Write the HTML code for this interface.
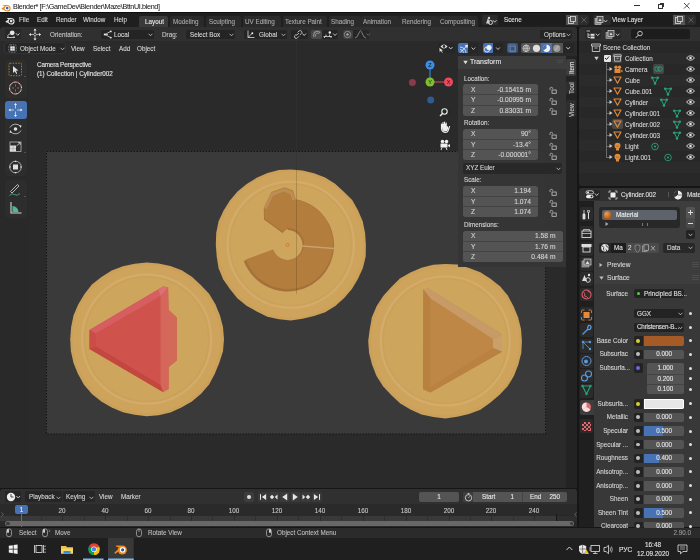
<!DOCTYPE html>
<html><head><meta charset="utf-8">
<style>
*{margin:0;padding:0;box-sizing:border-box}
html,body{width:700px;height:560px;overflow:hidden;background:#161616;font-family:"Liberation Sans",sans-serif;color:#d8d8d8}
.a{position:absolute}
.t{position:absolute;font-size:6.3px;line-height:8px;white-space:nowrap;color:#d6d6d6;-webkit-text-stroke-width:0.1px;will-change:transform}
.r{text-align:right}
.c{text-align:center}
.b{position:absolute;background:#282828;border-radius:2px}
.f{position:absolute;background:#545454}
svg{position:absolute;overflow:visible}
</style></head><body>
<!-- ============ TITLE BAR ============ -->
<div class="a" style="left:0;top:0;width:700px;height:12px;background:#fff"></div><div class="a" style="left:0;top:12px;width:700px;height:1.5px;background:#0e0e0e"></div>
<svg style="left:1px;top:1.5px" width="10" height="10" viewBox="0 0 10 10"><path d="M0.4 6.6 L3.6 4.4 L1.6 3.1 L5.2 3.1 Q9.4 2.8 9.6 6.2 Q9.6 9.6 6 9.6 Q3.6 9.6 3 7.8 L1.2 7.6 Z" fill="#f08a1c"/><circle cx="6.1" cy="6.2" r="2.3" fill="#fff"/><circle cx="6.2" cy="6.1" r="1.3" fill="#2a6ab0"/></svg>
<div class="t" style="left:13px;top:2px;color:#303040;font-size:7.2px;line-height:9px;letter-spacing:-0.33px;color:#1a1a1a;-webkit-text-stroke-width:0.05px">Blender* [F:\GameDev\Blender\Maze\BttnUI.blend]</div>
<div class="a" style="left:633.5px;top:5px;width:6px;height:0.9px;background:#333"></div>
<div class="a" style="left:658.3px;top:4px;width:4.5px;height:4.5px;border:0.9px solid #333"></div>
<div class="a" style="left:659.8px;top:2.7px;width:4.5px;height:4.5px;border-top:0.9px solid #333;border-right:0.9px solid #333"></div>
<svg style="left:683.5px;top:2.8px" width="5.5" height="5.5" viewBox="0 0 7 7"><path d="M0 0L7 7M7 0L0 7" stroke="#333" stroke-width="1.1"/></svg>

<!-- ============ TOP BAR ============ -->
<div class="a" style="left:0;top:13px;width:700px;height:14px;background:#1f1f1f"></div>

<svg style="left:5px;top:14.5px" width="10" height="10" viewBox="0 0 10 10"><path d="M0.4 6.6 L3.6 4.4 L1.6 3.1 L5.2 3.1 Q9.4 2.8 9.6 6.2 Q9.6 9.6 6 9.6 Q3.6 9.6 3 7.8 L1.2 7.6 Z" fill="#e6e6e6"/><circle cx="6.1" cy="6.2" r="2.3" fill="#232323"/><circle cx="6.2" cy="6.1" r="1.3" fill="#e6e6e6"/></svg>
<div class="t" style="left:19px;top:16px">File</div>
<div class="t" style="left:37px;top:16px">Edit</div>
<div class="t" style="left:55.5px;top:16px">Render</div>
<div class="t" style="left:83px;top:16px">Window</div>
<div class="t" style="left:113.5px;top:16px">Help</div>
<div class="a" style="left:139px;top:15.5px;width:29px;height:11.5px;background:#3a3a3a;border-radius:2px 2px 0 0"></div>
<div class="t" style="left:144.5px;top:17.8px;color:#e8e8e8">Layout</div>
<div class="a" style="left:170px;top:15.5px;width:34px;height:11.5px;background:#2a2a2a;border-radius:2px 2px 0 0"></div>
<div class="t" style="left:173px;top:17.8px;color:#a8a8a8">Modeling</div>
<div class="a" style="left:206px;top:15.5px;width:35px;height:11.5px;background:#2a2a2a;border-radius:2px 2px 0 0"></div>
<div class="t" style="left:209px;top:17.8px;color:#a8a8a8">Sculpting</div>
<div class="a" style="left:243px;top:15.5px;width:38px;height:11.5px;background:#2a2a2a;border-radius:2px 2px 0 0"></div>
<div class="t" style="left:245px;top:17.8px;color:#a8a8a8">UV Editing</div>
<div class="a" style="left:283px;top:15.5px;width:44px;height:11.5px;background:#2a2a2a;border-radius:2px 2px 0 0"></div>
<div class="t" style="left:284.5px;top:17.8px;color:#a8a8a8">Texture Paint</div>
<div class="a" style="left:329px;top:15.5px;width:32px;height:11.5px;background:#2a2a2a;border-radius:2px 2px 0 0"></div>
<div class="t" style="left:330.6px;top:17.8px;color:#a8a8a8">Shading</div>
<div class="a" style="left:361px;top:15.5px;width:39px;height:11.5px;background:#2a2a2a;border-radius:2px 2px 0 0"></div>
<div class="t" style="left:363px;top:17.8px;color:#a8a8a8">Animation</div>
<div class="a" style="left:400px;top:15.5px;width:38px;height:11.5px;background:#2a2a2a;border-radius:2px 2px 0 0"></div>
<div class="t" style="left:402px;top:17.8px;color:#a8a8a8">Rendering</div>
<div class="a" style="left:438px;top:15.5px;width:40px;height:11.5px;background:#2a2a2a;border-radius:2px 2px 0 0"></div>
<div class="t" style="left:440px;top:17.8px;color:#a8a8a8">Compositing</div>
<!-- scene selector -->
<div class="b" style="left:482px;top:15px;width:16px;height:10px;background:#2c2c2c"></div>
<svg style="left:485px;top:16px" width="12" height="9" viewBox="0 0 12 9"><path d="M1 7.5 L3 2 L5 7.5 Z" fill="#cfcfcf"/><circle cx="5.5" cy="6.5" r="2" fill="none" stroke="#cfcfcf" stroke-width="1"/><circle cx="4" cy="2" r="1.2" fill="#cfcfcf"/><path d="M7.9 4.2 L9.7 6.2 L11.5 4.2" fill="none" stroke="#cfcfcf" stroke-width="0.9"/></svg>
<div class="a" style="left:499px;top:15px;width:68px;height:10px;background:#1d1d1d;border-radius:2px 0 0 2px"></div>
<div class="t" style="left:504px;top:16px;color:#e0e0e0">Scene</div>
<div class="a" style="left:566px;top:15px;width:12px;height:10px;background:#545454"></div>
<svg style="left:568px;top:16px" width="8" height="8" viewBox="0 0 8 8"><rect x="0.5" y="1.5" width="5" height="6" fill="none" stroke="#ddd" stroke-width="0.8"/><rect x="2.5" y="0.5" width="5" height="5" fill="#545454" stroke="#ddd" stroke-width="0.8"/></svg>
<div class="a" style="left:578px;top:15px;width:11px;height:10px;background:#2c2c2c;border-radius:0 2px 2px 0"></div>
<svg style="left:581px;top:17px" width="6" height="6" viewBox="0 0 6 6"><path d="M0.5 0.5L5.5 5.5M5.5 0.5L0.5 5.5" stroke="#6a6a6a" stroke-width="0.8"/></svg>
<!-- view layer selector -->
<div class="b" style="left:593px;top:15px;width:18px;height:10px;background:#2c2c2c"></div>
<svg style="left:594px;top:16px" width="14" height="9" viewBox="0 0 14 9"><rect x="1" y="2.5" width="6" height="6" fill="#888" stroke="#ccc" stroke-width="0.6"/><rect x="3" y="0.5" width="6" height="6" fill="#555" stroke="#ddd" stroke-width="0.7"/><path d="M4.5 5 L6 2.5 L7.5 5Z" fill="#ddd"/><path d="M9.7 4.0 L11.5 6.0 L13.3 4.0" fill="none" stroke="#cfcfcf" stroke-width="0.9"/></svg>
<div class="a" style="left:611px;top:15px;width:74px;height:10px;background:#1d1d1d;border-radius:2px 0 0 2px"></div>
<div class="t" style="left:612px;top:16px;color:#e0e0e0">View Layer</div>
<div class="a" style="left:673px;top:15px;width:12px;height:10px;background:#545454"></div>
<svg style="left:675px;top:16px" width="8" height="8" viewBox="0 0 8 8"><rect x="0.5" y="1.5" width="5" height="6" fill="none" stroke="#ddd" stroke-width="0.8"/><rect x="2.5" y="0.5" width="5" height="5" fill="#545454" stroke="#ddd" stroke-width="0.8"/></svg>
<div class="a" style="left:685px;top:15px;width:11px;height:10px;background:#2c2c2c;border-radius:0 2px 2px 0"></div>
<svg style="left:688px;top:17px" width="6" height="6" viewBox="0 0 6 6"><path d="M0.5 0.5L5.5 5.5M5.5 0.5L0.5 5.5" stroke="#6a6a6a" stroke-width="0.8"/></svg>

<!-- ============ 3D VIEWPORT ============ -->
<div class="a" style="left:0;top:27px;width:577px;height:461px;background:#2a2a2a;border-radius:3px 3px 0 0;overflow:hidden"></div>
<div class="a" style="left:0;top:27px;width:577px;height:14px;background:#303030;border-radius:3px 3px 0 0"></div>
<!--COINS-->
<div class="a" style="left:46px;top:151px;width:500px;height:283px;background:#3a3a3a"></div>
<div class="a" style="left:296.2px;top:41px;width:0.9px;height:110px;background:#2f2f2f"></div>
<svg style="left:0;top:0" width="700" height="560" viewBox="0 0 700 560"><rect x="46.5" y="151.5" width="499" height="282.5" fill="none" stroke="#141414" stroke-width="1.1" stroke-dasharray="1.6 1.4"/><path d="M365.9 244.7 L365.7 256.6 L362.9 268.1 L357.9 278.9 L351.9 289.1 L344.2 298.1 L335.3 305.9 L325.2 312.2 L314.0 316.1 L302.5 318.8 L290.8 320.5 L279.0 319.2 L267.4 316.8 L256.7 311.5 L246.5 305.7 L237.3 298.2 L229.9 288.9 L223.1 279.2 L218.6 268.2 L216.7 256.4 L215.8 244.7 L216.2 232.9 L218.6 221.2 L223.6 210.5 L229.9 200.5 L237.5 191.4 L246.7 184.0 L256.7 177.7 L267.5 173.0 L279.0 170.1 L290.8 169.5 L302.6 170.4 L314.0 173.2 L325.1 177.5 L335.1 183.8 L343.8 191.7 L352.2 200.1 L358.1 210.4 L362.7 221.3 L365.1 232.9 Z" fill="#cba05a"/><circle cx="290.8" cy="244.7" r="72.6" fill="#cea45c"/><circle cx="290.8" cy="244.7" r="63.099999999999994" fill="none" stroke="#d5ae70" stroke-width="2.2" opacity="0.75"/><circle cx="290.8" cy="244.7" r="60.599999999999994" fill="none" stroke="#c89e57" stroke-width="1.2" opacity="0.45"/><circle cx="290.8" cy="244.7" r="59.99999999999999" fill="#cea55c"/><path d="M243.8 260.9 L245.7 265.4 L248.1 269.6 L250.9 273.6 L254.1 277.3 L257.6 280.6 L261.5 283.6 L265.7 286.1 L270.1 288.1 L274.7 289.7 L279.4 290.8 L284.3 291.4 L289.1 291.5 L294.0 291.0 L298.7 290.1 L303.4 288.7 L307.9 286.8 L312.1 284.4 L316.1 281.6 L319.8 278.4 L323.1 274.9 L326.1 271.0 L328.6 266.8 L330.6 262.4 L332.2 257.8 L333.3 253.1 L333.9 248.2 L334.0 243.4 L333.5 238.5 L332.6 233.8 L331.2 229.1 L329.3 224.6 L326.9 220.4 L324.1 216.4 L320.9 212.7 L317.4 209.4 L313.5 206.4 L309.3 203.9 L304.9 201.9 L300.3 200.3 L295.6 199.2 L295.6 199.2 L295.0 200.0 L292.6 191.5 L284.0 188.3 L271.0 193.0 L263.8 208.0 L264.0 219.5 L282.5 233.0 L287.0 228.5 L288.0 230.0 L290.1 230.2 L292.1 230.7 L294.1 231.5 L295.9 232.6 L297.5 233.9 L299.0 235.4 L300.2 237.1 L301.2 238.9 L301.9 240.9 L302.4 242.9 L302.5 245.0 L302.4 247.1 L301.9 249.1 L301.2 251.1 L300.2 252.9 L299.0 254.6 L297.5 256.1 L295.9 257.4 L294.1 258.5 L292.1 259.3 L290.1 259.8 L288.0 260.0 L285.9 259.9 L283.9 259.6 L281.9 258.9 L280.0 258.0 L278.3 256.8 L276.7 255.4 L275.4 253.8 L274.3 252.0 L273.4 250.1 Z" fill="#a4713a"/><path d="M245.2 260.4 L247.1 264.7 L249.3 268.8 L252.0 272.7 L255.1 276.3 L258.6 279.5 L262.3 282.3 L266.4 284.7 L270.6 286.7 L275.1 288.3 L279.7 289.3 L284.4 289.9 L289.1 290.0 L293.8 289.6 L298.4 288.7 L302.9 287.3 L307.2 285.4 L311.3 283.2 L315.2 280.5 L318.8 277.4 L322.0 273.9 L324.8 270.2 L327.2 266.1 L329.2 261.9 L330.8 257.4 L331.8 252.8 L332.4 248.1 L332.5 243.4 L332.1 238.7 L331.2 234.1 L329.8 229.6 L327.9 225.3 L325.7 221.2 L323.0 217.3 L319.9 213.7 L316.4 210.5 L312.7 207.7 L308.6 205.3 L304.4 203.3 L299.9 201.7 L295.3 200.7 L295.3 200.7 L295.0 200.0 L292.6 191.5 L284.0 188.3 L271.0 193.0 L263.8 208.0 L264.0 219.5 L282.5 233.0 L287.0 228.5 L288.1 229.0 L290.3 229.2 L292.4 229.8 L294.5 230.6 L296.4 231.7 L298.2 233.1 L299.8 234.7 L301.1 236.5 L302.1 238.5 L302.9 240.6 L303.3 242.8 L303.5 245.0 L303.3 247.2 L302.9 249.4 L302.1 251.5 L301.1 253.5 L299.8 255.3 L298.2 256.9 L296.4 258.3 L294.5 259.4 L292.4 260.2 L290.3 260.8 L288.1 261.0 L285.8 260.9 L283.6 260.5 L281.5 259.8 L279.5 258.9 L277.6 257.6 L276.0 256.1 L274.6 254.4 L273.4 252.5 L272.5 250.5 Z" fill="#b27d3d" transform="translate(0.5,-1)"/><path d="M302 246 L334 248.5" stroke="#c9a070" stroke-width="1.3"/><path d="M263.8 208 L271 193 L284 188.3 L292.6 191.5 L295 200 L292.5 200.5 L290 194 L283.5 191.5 L273 196 L266.5 209 Z" fill="#c39a68" opacity="0.6"/><circle cx="287.5" cy="245" r="1.6" fill="none" stroke="#e07020" stroke-width="0.8"/><path d="M224.0 339.2 L223.0 351.3 L219.3 362.8 L214.7 373.9 L209.1 384.6 L201.1 393.7 L191.9 401.6 L181.4 407.5 L170.4 412.4 L158.6 415.3 L146.6 416.2 L134.6 414.8 L122.9 412.3 L111.7 407.6 L101.3 401.6 L91.9 393.9 L84.0 384.7 L78.0 374.1 L73.5 362.9 L70.9 351.2 L70.2 339.2 L71.1 327.2 L73.5 315.4 L78.2 304.4 L84.5 294.1 L91.9 284.5 L101.4 277.0 L111.7 270.6 L122.9 266.3 L134.6 263.7 L146.6 262.5 L158.6 263.6 L170.4 266.1 L181.7 270.2 L191.9 276.8 L200.8 285.0 L209.1 293.8 L215.4 304.2 L220.0 315.4 L223.0 327.1 Z" fill="#cba05a"/><circle cx="146.6" cy="339.2" r="74" fill="#cea45c"/><circle cx="146.6" cy="339.2" r="64.5" fill="none" stroke="#d5ae70" stroke-width="2.2" opacity="0.75"/><circle cx="146.6" cy="339.2" r="62" fill="none" stroke="#c89e57" stroke-width="1.2" opacity="0.45"/><circle cx="146.6" cy="339.2" r="61.4" fill="#cea55c"/><path d="M89.5 330 L163.3 286.4 L168.1 287.6 L168.5 310 L176.6 317.4 L176.6 360.5 L168.5 367 L168.5 389 L163 392 L89.5 349 Z" fill="#cf524c"/><path d="M160.5 296 L168.1 287.6 L168.5 310 L176.6 317.4 L176.6 360.5 L168.5 367 L168.5 389 L163 392 L160.5 385 Z" fill="#d4665a"/><path d="M168.5 310 L176.6 317.4 L176.6 360.5 L168.5 367 Z" fill="#d26a5a"/><path d="M89.5 330 L163.3 286.4 L168.1 287.6 L160.5 296 L95.5 333.5 Z" fill="#d65d60"/><path d="M158.5 289.5 L163.3 286.4 L168.1 287.6 L160.5 296 Z" fill="#dc7274"/><path d="M89.5 349 L163 392 L160.5 385 L96 346.5 Z" fill="#c2473f"/><path d="M89.5 330 L95.5 333.5 L96 346.5 L89.5 349Z" fill="#ca4d47"/><path d="M521.9 341.0 L521.3 353.0 L518.3 364.7 L513.9 376.0 L507.6 386.3 L499.4 395.1 L490.2 402.8 L480.4 409.8 L469.0 413.9 L457.3 416.7 L445.3 418.4 L433.3 416.9 L421.4 414.5 L410.4 409.5 L400.0 403.3 L391.2 395.1 L383.0 386.3 L376.5 376.1 L372.1 364.8 L369.1 353.1 L368.2 341.0 L369.8 329.0 L371.9 317.2 L376.7 306.0 L383.2 295.9 L391.3 287.0 L399.9 278.5 L410.4 272.5 L421.5 267.7 L433.2 264.7 L445.3 263.9 L457.4 264.6 L469.0 268.0 L480.3 272.2 L490.5 278.8 L500.0 286.3 L507.8 295.6 L513.5 306.3 L518.1 317.3 L521.0 329.0 Z" fill="#cba05a"/><circle cx="445.3" cy="341" r="74" fill="#cea45c"/><circle cx="445.3" cy="341" r="64.5" fill="none" stroke="#d5ae70" stroke-width="2.2" opacity="0.75"/><circle cx="445.3" cy="341" r="62" fill="none" stroke="#c89e57" stroke-width="1.2" opacity="0.45"/><circle cx="445.3" cy="341" r="61.4" fill="#cea55c"/><path d="M423.3 289.6 L428.2 288.6 L495.7 330.3 L502 334.6 L502 351.7 L430.3 392.4 L423 389.2 Z" fill="#bf8745"/><path d="M423.3 289.6 L428.2 288.6 L495.7 330.3 L502 334.6 L493 339 L430.5 298.5 Z" fill="#c79a68"/><path d="M423.3 289.6 L430.5 298.5 L430.3 386 L430.3 392.4 L423 389.2 Z" fill="#b8813f"/><path d="M502 334.6 L502 351.7 L493 348 L493 339 Z" fill="#cb9f6c"/><path d="M493 348 L502 351.7 L430.3 392.4 L430.3 387 Z" fill="#b98242"/><path d="M296.5 151 V294" stroke="#3a2a10" stroke-width="0.7" opacity="0.3"/></svg>
<!--/COINS-->
<!-- ============ TOOL HEADER ============ -->
<div class="b" style="left:5px;top:29px;width:16px;height:10px;background:#282828"></div>
<svg style="left:6px;top:29px" width="15" height="10" viewBox="0 0 15 10"><path d="M1 8.5 H9 M2 8.5 V7 M8 8.5 V7 M1.5 6.5 L4 4.8" stroke="#ddd" stroke-width="0.8" fill="none"/><circle cx="6.2" cy="3.8" r="2.4" fill="#e6e6e6"/><path d="M10.0 4.3 L11.8 6.3 L13.6 4.3" fill="none" stroke="#cfcfcf" stroke-width="0.9"/></svg>
<svg style="left:28px;top:28px" width="14" height="13" viewBox="0 0 14 13"><path d="M7 1 V12 M1.5 6.5 H12.5" stroke="#ddd" stroke-width="0.7"/><path d="M7 0.5 L5.5 2.5 H8.5Z M7 12.5 L5.5 10.5 H8.5Z M1 6.5 L3 5 V8Z M13 6.5 L11 5 V8Z" fill="#eee"/><circle cx="7" cy="6.5" r="1.3" fill="#303030" stroke="#ddd" stroke-width="0.6"/></svg>
<div class="t" style="left:50px;top:30.7px;color:#c8c8c8">Orientation:</div>
<div class="b" style="left:101px;top:29.5px;width:52.5px;height:9.5px;background:#242424"></div>
<svg style="left:103px;top:30px" width="10" height="9" viewBox="0 0 10 9"><path d="M2 4.5 L7.5 1.5 M2 4.5 L7.5 7.5 M2 4.5 H5" stroke="#ddd" stroke-width="0.8"/><circle cx="1.8" cy="4.5" r="1.1" fill="#eee"/><circle cx="7.8" cy="1.4" r="0.9" fill="#eee"/><circle cx="7.8" cy="7.6" r="0.9" fill="#eee"/></svg>
<div class="t" style="left:114px;top:30.5px">Local</div>
<svg style="left:148px;top:33px" width="5" height="4" viewBox="0 0 5 4"><path d="M0.6 0.8 L2.5 2.8 L4.4 0.8" fill="none" stroke="#ccc" stroke-width="0.8"/></svg>
<div class="t" style="left:161.5px;top:30.5px;color:#c8c8c8">Drag:</div>
<div class="b" style="left:186px;top:29.5px;width:49px;height:9.5px;background:#242424"></div>
<div class="t" style="left:190px;top:30.5px">Select Box</div>
<svg style="left:229px;top:33px" width="5" height="4" viewBox="0 0 5 4"><path d="M0.6 0.8 L2.5 2.8 L4.4 0.8" fill="none" stroke="#ccc" stroke-width="0.8"/></svg>
<div class="b" style="left:244px;top:29.5px;width:43px;height:9.5px;background:#242424"></div>
<svg style="left:246px;top:30px" width="9" height="9" viewBox="0 0 9 9"><path d="M2 0.5 V7.5 H8.5 M2 7.5 L6 3.5" stroke="#ddd" stroke-width="0.8" fill="none"/><circle cx="6.3" cy="3.2" r="1" fill="#eee"/></svg>
<div class="t" style="left:258.5px;top:30.5px">Global</div>
<svg style="left:281px;top:33px" width="5" height="4" viewBox="0 0 5 4"><path d="M0.6 0.8 L2.5 2.8 L4.4 0.8" fill="none" stroke="#ccc" stroke-width="0.8"/></svg>
<div class="b" style="left:291px;top:29.5px;width:17px;height:9.5px;background:#242424"></div>
<svg style="left:292px;top:30px" width="15" height="9" viewBox="0 0 15 9"><path d="M5.5 2.5 L7 1 Q8.5 0 9.5 1.2 Q10.5 2.4 9.3 3.6 L7.8 5" fill="none" stroke="#ddd" stroke-width="0.8"/><path d="M4.5 4 L3 5.5 Q1.8 6.8 3 8 Q4.2 9 5.5 7.8 L7 6.3" fill="none" stroke="#ddd" stroke-width="0.8"/><path d="M4.5 5.5 L7 3" stroke="#ddd" stroke-width="0.8"/><path d="M10.4 3.5 L12.2 5.5 L14.0 3.5" fill="none" stroke="#cfcfcf" stroke-width="0.9"/></svg>
<div class="b" style="left:311px;top:29.5px;width:11px;height:9.5px;background:#4a4a4a"></div>
<svg style="left:312px;top:30px" width="9" height="9" viewBox="0 0 9 9"><path d="M2 7 Q1 3 4 1.5 Q7 0.5 8 3" fill="none" stroke="#999" stroke-width="1.1"/><path d="M3.5 6.5 Q3 4 5 3 Q6.5 2.5 7 4" fill="none" stroke="#999" stroke-width="0.9"/></svg>
<div class="b" style="left:322px;top:29.5px;width:16px;height:9.5px;background:#242424"></div>
<svg style="left:323px;top:30px" width="15" height="9" viewBox="0 0 15 9"><path d="M0.5 6.5 H9 M1.5 6.5 V8 M8 6.5 V8 M3 6.5 V4.5 M6.5 6.5 V4.5" stroke="#ddd" stroke-width="0.8"/><circle cx="6.8" cy="2.5" r="1.2" fill="#eee"/><path d="M10.2 3.5 L12.0 5.5 L13.8 3.5" fill="none" stroke="#cfcfcf" stroke-width="0.9"/></svg>
<div class="b" style="left:343px;top:29.5px;width:10px;height:9.5px;background:#3f3f3f"></div>
<svg style="left:343px;top:30px" width="9" height="9" viewBox="0 0 9 9"><circle cx="4.5" cy="4.5" r="3.2" fill="none" stroke="#999" stroke-width="0.8"/><circle cx="4.5" cy="4.5" r="1.2" fill="#aaa"/></svg>
<div class="b" style="left:353px;top:29.5px;width:16px;height:9.5px;background:#262626"></div><svg style="left:354px;top:30px" width="17" height="9" viewBox="0 0 17 9"><path d="M1 8 Q3 8 4.5 4 Q6 0.5 6.5 0.5 Q7 0.5 8.5 4 Q10 8 12 8" fill="none" stroke="#888" stroke-width="0.9"/><path d="M12.4 3.5 L14.2 5.5 L16.0 3.5" fill="none" stroke="#666" stroke-width="0.9"/></svg>
<div class="b" style="left:540px;top:30px;width:32px;height:9px;background:#242424"></div>
<div class="t" style="left:543.5px;top:30.5px">Options</div>
<svg style="left:566px;top:33px" width="5" height="4" viewBox="0 0 5 4"><path d="M0.6 0.8 L2.5 2.8 L4.4 0.8" fill="none" stroke="#ccc" stroke-width="0.8"/></svg>

<!-- ============ VIEWPORT HEADER ============ -->
<div class="b" style="left:5px;top:42.5px;width:59.5px;height:10.5px;background:#262626;box-shadow:0 0 0 0.6px #3a3a3a"></div>
<svg style="left:8px;top:43.5px" width="9" height="9" viewBox="0 0 9 9"><rect x="0.8" y="0.8" width="7.4" height="7.4" rx="1.5" fill="none" stroke="#bbb" stroke-width="0.6" stroke-dasharray="1.5 1"/><rect x="2.3" y="2.3" width="4.4" height="4.4" fill="#e8e8e8"/><path d="M4.5 2.3 V6.7 M2.3 4.5 H6.7" stroke="#777" stroke-width="0.4"/></svg>
<div class="t" style="left:19.5px;top:44.5px">Object Mode</div>
<svg style="left:59.5px;top:46.5px" width="5" height="4" viewBox="0 0 5 4"><path d="M0.6 0.8 L2.5 2.8 L4.4 0.8" fill="none" stroke="#ccc" stroke-width="0.8"/></svg>
<div class="b" style="left:67px;top:42.5px;width:20px;height:10.5px;background:#2b2b2b"></div>
<div class="t" style="left:71px;top:44.5px">View</div>
<div class="b" style="left:89px;top:42.5px;width:24px;height:10.5px;background:#2b2b2b"></div>
<div class="t" style="left:93px;top:44.5px">Select</div>
<div class="b" style="left:115px;top:42.5px;width:18px;height:10.5px;background:#2b2b2b"></div>
<div class="t" style="left:118.5px;top:44.5px">Add</div>
<div class="b" style="left:134.5px;top:42.5px;width:27px;height:10.5px;background:#2b2b2b"></div>
<div class="t" style="left:137px;top:44.5px">Object</div>

<div class="b" style="left:437.5px;top:42.7px;width:17px;height:10.7px;background:#262626"></div>
<svg style="left:438px;top:43px" width="17" height="10" viewBox="0 0 17 10"><path d="M2.5 3.5 Q6 -0.5 9.5 3.5 Q6 7.5 2.5 3.5Z" fill="#e8e8e8"/><circle cx="6" cy="3.5" r="1.4" fill="#333"/><path d="M1 4.5 L1.5 9.5 L2.8 8.2 L4.2 10 L5 9.4 L3.8 7.8 L5.5 7.5 Z" fill="#e8e8e8" stroke="#262626" stroke-width="0.5"/><path d="M10.9 4.0 L12.7 6.0 L14.5 4.0" fill="none" stroke="#cfcfcf" stroke-width="0.9"/></svg>
<div class="b" style="left:457.8px;top:42.7px;width:20.5px;height:10.7px;background:#262626"></div>
<div class="a" style="left:457.8px;top:42.7px;width:10.7px;height:10.7px;background:#4772b3;border-radius:2px 0 0 2px"></div>
<svg style="left:458.5px;top:43.5px" width="20" height="9" viewBox="0 0 20 9"><path d="M1.2 8.5 L8 1.7" fill="none" stroke="#f0f0f0" stroke-width="0.9"/><path d="M9 0.8 L5.6 1.5 L8.3 4.2Z" fill="#f0f0f0"/><path d="M1 3 A6 6 0 0 1 7 9" fill="none" stroke="#f0f0f0" stroke-width="0.8"/><path d="M1 5.5 A3.5 3.5 0 0 1 4.5 9" fill="none" stroke="#f0f0f0" stroke-width="0.7"/><path d="M12.6 3.5 L14.4 5.5 L16.2 3.5" fill="none" stroke="#cfcfcf" stroke-width="0.9"/></svg>
<div class="b" style="left:482.5px;top:42.7px;width:20.5px;height:10.7px;background:#262626"></div>
<div class="a" style="left:482.5px;top:42.7px;width:10.7px;height:10.7px;background:#4772b3;border-radius:2px 0 0 2px"></div>
<svg style="left:483px;top:43.5px" width="20" height="9" viewBox="0 0 20 9"><circle cx="4" cy="5.5" r="2.6" fill="none" stroke="#f0f0f0" stroke-width="0.9"/><circle cx="6" cy="3.5" r="2.6" fill="#f0f0f0"/><path d="M13.2 3.5 L15.0 5.5 L16.8 3.5" fill="none" stroke="#cfcfcf" stroke-width="0.9"/></svg>
<div class="b" style="left:507px;top:42.7px;width:10.8px;height:10.7px;background:#3b5475"></div>
<svg style="left:508px;top:43.5px" width="9" height="9" viewBox="0 0 9 9"><rect x="1" y="1" width="6" height="6" fill="none" stroke="#6c8ab8" stroke-width="0.7"/><rect x="2.5" y="2.5" width="5" height="5" fill="none" stroke="#6c8ab8" stroke-width="0.6"/></svg>
<div class="b" style="left:521px;top:42.7px;width:52.5px;height:10.7px;background:#262626"></div>
<div class="a" style="left:521px;top:42.7px;width:41.8px;height:10.7px;background:#545454;border-radius:2px 0 0 2px"></div>
<div class="a" style="left:541.3px;top:42.7px;width:10.3px;height:10.7px;background:#4772b3"></div>
<svg style="left:521px;top:42.7px" width="52" height="11" viewBox="0 0 52 11"><circle cx="5.2" cy="5.3" r="3.3" fill="none" stroke="#e0e0e0" stroke-width="0.7"/><path d="M1.9 5.3 H8.5 M5.2 2 V8.6" stroke="#e0e0e0" stroke-width="0.6"/><ellipse cx="5.2" cy="5.3" rx="1.4" ry="3.3" fill="none" stroke="#e0e0e0" stroke-width="0.6"/><circle cx="15.5" cy="5.3" r="3.6" fill="#dedede"/><circle cx="25.5" cy="5.3" r="3.6" fill="#f4f4f4"/><path d="M25.5 1.7 V5.3 L22.5 7.5 A3.6 3.6 0 0 1 25.5 1.7Z" fill="#4772b3"/><circle cx="35.8" cy="5.3" r="3.6" fill="#9a9a9a"/><path d="M33.5 7.5 Q36 6 37.2 3" stroke="#ccc" stroke-width="0.7" fill="none"/><path d="M45.4 4.1 L47.2 6.1 L49.0 4.1" fill="none" stroke="#cfcfcf" stroke-width="0.9"/></svg>

<!-- ============ TOOLBAR ============ -->
<div class="a" style="left:0;top:55px;width:29px;height:433px;background:#262626;opacity:.25"></div>
<div class="a" style="left:4.5px;top:59.5px;width:22.5px;height:38px;background:#2d2d2d;border-radius:3px"></div>
<div class="a" style="left:4.5px;top:101px;width:22.5px;height:75px;background:#2d2d2d;border-radius:3px"></div>
<div class="a" style="left:5px;top:101px;width:22px;height:18px;background:#4772b3;border-radius:3px"></div>
<div class="a" style="left:4.5px;top:180px;width:22.5px;height:37.5px;background:#2d2d2d;border-radius:3px"></div>
<svg style="left:0;top:0" width="30" height="220" viewBox="0 0 30 220">
 <rect x="9" y="63.2" width="12.5" height="12.5" rx="1" fill="none" stroke="#c8923a" stroke-width="0.8" stroke-dasharray="1.5 1.2"/>
 <path d="M13 66 L13 73 L14.8 71.3 L16.2 74 L17.2 73.5 L15.9 70.8 L18.3 70.5 Z" fill="#e0e0e0"/>
 <path d="M24.5 77 L25.5 76" stroke="#999" stroke-width="0.7"/>
 <circle cx="15.5" cy="88" r="6" fill="none" stroke="#ddd" stroke-width="1"/>
 <circle cx="15.5" cy="88" r="6" fill="none" stroke="#c03838" stroke-width="1" stroke-dasharray="2.2 2.5"/>
 <path d="M15.5 84.5 V86.5 M15.5 89.5 V91.5 M12 88 H14 M17 88 H19" stroke="#999" stroke-width="0.7"/>
 <path d="M15.5 104 V108.5 M15.5 111.5 V116 M9.5 110 H14 M17 110 H21.5" stroke="#f0f0f0" stroke-width="0.7"/>
 <path d="M15.5 103 L14 105 H17Z M15.5 117 L14 115 H17Z M8.5 110 L10.5 108.5 V111.5Z M22.5 110 L20.5 108.5 V111.5Z" fill="#f2f2f2"/>
 <path d="M10 127.5 A6 5.5 0 0 1 20.5 126.5" fill="none" stroke="#d0d0d0" stroke-width="0.8"/>
 <path d="M21 130.5 A6 5.5 0 0 1 10.5 131.5" fill="none" stroke="#d0d0d0" stroke-width="0.8"/>
 <circle cx="15.5" cy="129" r="1.8" fill="#e0e0e0"/>
 <path d="M19 125 L21.5 125.5 L20.8 128Z M12 133 L9.5 132.5 L10.2 130Z" fill="#e0e0e0"/>
 <rect x="10" y="145.5" width="6" height="6" fill="#dcdcdc"/>
 <path d="M13 145.5 V151.5 M10 148.5 H16" stroke="#888" stroke-width="0.4"/>
 <rect x="10" y="142" width="11" height="9.5" fill="none" stroke="#c8c8c8" stroke-width="0.7"/>
 <path d="M16.5 146 L20 142.8 M18 142.6 H20.2 V144.8" fill="none" stroke="#d8d8d8" stroke-width="0.8"/>
 <path d="M24.5 153 L25.5 152" stroke="#999" stroke-width="0.7"/>
 <circle cx="15.5" cy="167" r="5.8" fill="none" stroke="#c8c8c8" stroke-width="0.8"/>
 <rect x="13" y="164.5" width="5" height="5" fill="#e0e0e0"/>
 <path d="M15.5 160.5 L14.5 162 H16.5Z M15.5 173.5 L14.5 172 H16.5Z M9 167 L10.5 166 V168Z M22 167 L20.5 166 V168Z" fill="#e8e8e8"/>
 <path d="M10.5 191.5 L17.5 184.5 L19 186 L12 193 Z" fill="none" stroke="#d8d8d8" stroke-width="0.8"/>
 <path d="M9.5 195.5 Q12 192.5 14.5 194.5 Q17 196.5 20 193.5" fill="none" stroke="#52b892" stroke-width="0.8"/>
 <path d="M24.5 197 L25.5 196" stroke="#999" stroke-width="0.7"/>
 <path d="M11 202 V213 H21.5" fill="none" stroke="#d8d8d8" stroke-width="1.1"/>
 <path d="M12.5 212 V206 A6 6 0 0 1 18.5 212 Z" fill="#52b892"/>
</svg>

<!-- ============ NAV GIZMO ============ -->
<svg style="left:0;top:0" width="700" height="560" viewBox="0 0 700 560">
 <circle cx="412.4" cy="82.4" r="3.5" fill="#8a3a48"/>
 <circle cx="430.7" cy="100" r="3.5" fill="#2f5a94"/>
 <path d="M430 82 V65 M430 82 H448" stroke-width="1" fill="none"/>
 <path d="M430 82 V66" stroke="#3a8ee0" stroke-width="1"/>
 <path d="M430 82 H447" stroke="#e04858" stroke-width="1"/>
 <circle cx="430" cy="65" r="4.5" fill="#3a8ee6"/>
 <circle cx="448.5" cy="82" r="4.5" fill="#ea4a5c"/>
 <circle cx="430" cy="82" r="4.5" fill="#7cc12c"/>
 <text x="430" y="67.3" font-size="5.5" fill="#111" text-anchor="middle" font-family="Liberation Sans">Z</text>
 <text x="448.5" y="84.2" font-size="5.5" fill="#311" text-anchor="middle" font-family="Liberation Sans">X</text>
 <text x="430" y="84.2" font-size="5.5" fill="#111" text-anchor="middle" font-family="Liberation Sans">Y</text>
 <circle cx="445" cy="112" r="5.5" fill="#262626" opacity=".5"/>
 <circle cx="444.5" cy="111.5" r="2.7" fill="none" stroke="#eee" stroke-width="1.1"/>
 <path d="M442.5 113.5 L440 116" stroke="#eee" stroke-width="1.4"/>
 <circle cx="445" cy="128" r="5.5" fill="#262626" opacity=".5"/>
 <path d="M441.5 127 V124 M443 126.5 V122.5 M444.6 126.5 V122 M446.2 127 V123 M441.5 127 Q441 131.5 445 132.5 Q448 132.5 448.5 129.5 L449.5 126.5" fill="none" stroke="#eee" stroke-width="1.2" stroke-linecap="round"/>
 <path d="M442 127 Q442 131 445 131.5 Q447.5 131.5 448 129 L448 126 L446.2 127 V124 L441.5 124Z" fill="#eee"/>
 <circle cx="445" cy="145" r="5.5" fill="#262626" opacity=".5"/>
 <circle cx="442.5" cy="141.5" r="1.8" fill="#eee"/><circle cx="446.5" cy="141.5" r="1.8" fill="#eee"/>
 <rect x="440.5" y="143.5" width="7" height="4" fill="#eee"/><path d="M447.5 145.5 L450 144 V147.5Z" fill="#eee"/>
 <path d="M442 147.5 L441 150 M446 147.5 L447 150" stroke="#eee" stroke-width="0.9"/>
</svg>

<!-- ============ N PANEL ============ -->
<div class="a" style="left:458px;top:56px;width:108px;height:211px;background:#353535;opacity:.96"></div>
<div class="a" style="left:458px;top:56px;width:108px;height:12.5px;background:#3d3d3d"></div>
<svg style="left:463px;top:60px" width="5" height="5" viewBox="0 0 5 5"><path d="M0.3 0.8 H4.7 L2.5 4.2Z" fill="#ddd"/></svg>
<div class="t" style="left:470px;top:58px;color:#e6e6e6;font-size:6.9px">Transform</div>
<div class="a" style="left:557px;top:60px;width:6px;height:1px;background:#4a4a4a"></div>
<div class="a" style="left:557px;top:62px;width:6px;height:1px;background:#4a4a4a"></div>
<div class="t" style="left:463.5px;top:74.5px">Location:</div>
<div class="a" style="left:462.5px;top:84.1px;width:75.5px;height:31.5px;background:#545454;border-radius:2.5px"></div><div class="a" style="left:462.5px;top:94.1px;width:75.5px;height:1px;background:#434343"></div><div class="t" style="left:470.5px;top:85.6px;font-size:6.6px">X</div><div class="t r" style="left:462.5px;width:68.0px;top:85.6px;font-size:6.7px">-0.15415 m</div><svg style="left:548px;top:86.4px" width="10" height="8" viewBox="0 0 10 8"><path d="M2 4 V2.8 Q2 1.3 3.4 1.3 Q4.8 1.3 4.8 2.8" fill="none" stroke="#cfcfcf" stroke-width="0.7"/><rect x="4" y="4" width="4.2" height="3.3" fill="none" stroke="#cfcfcf" stroke-width="0.75"/></svg><div class="a" style="left:462.5px;top:104.6px;width:75.5px;height:1px;background:#434343"></div><div class="t" style="left:470.5px;top:96.1px;font-size:6.6px">Y</div><div class="t r" style="left:462.5px;width:68.0px;top:96.1px;font-size:6.7px">-0.00995 m</div><svg style="left:548px;top:96.9px" width="10" height="8" viewBox="0 0 10 8"><path d="M2 4 V2.8 Q2 1.3 3.4 1.3 Q4.8 1.3 4.8 2.8" fill="none" stroke="#cfcfcf" stroke-width="0.7"/><rect x="4" y="4" width="4.2" height="3.3" fill="none" stroke="#cfcfcf" stroke-width="0.75"/></svg><div class="t" style="left:470.5px;top:106.6px;font-size:6.6px">Z</div><div class="t r" style="left:462.5px;width:68.0px;top:106.6px;font-size:6.7px">0.83031 m</div><svg style="left:548px;top:107.4px" width="10" height="8" viewBox="0 0 10 8"><path d="M2 4 V2.8 Q2 1.3 3.4 1.3 Q4.8 1.3 4.8 2.8" fill="none" stroke="#cfcfcf" stroke-width="0.7"/><rect x="4" y="4" width="4.2" height="3.3" fill="none" stroke="#cfcfcf" stroke-width="0.75"/></svg>
<div class="t" style="left:463.5px;top:119px">Rotation:</div>
<div class="a" style="left:462.5px;top:128.75px;width:75.5px;height:31.7px;background:#545454;border-radius:2.5px"></div><div class="a" style="left:462.5px;top:138.8px;width:75.5px;height:1px;background:#434343"></div><div class="t" style="left:470.5px;top:130.2px;font-size:6.6px">X</div><div class="t r" style="left:462.5px;width:68.0px;top:130.2px;font-size:6.7px">90°</div><svg style="left:548px;top:131.1px" width="10" height="8" viewBox="0 0 10 8"><path d="M2 4 V2.8 Q2 1.3 3.4 1.3 Q4.8 1.3 4.8 2.8" fill="none" stroke="#cfcfcf" stroke-width="0.7"/><rect x="4" y="4" width="4.2" height="3.3" fill="none" stroke="#cfcfcf" stroke-width="0.75"/></svg><div class="a" style="left:462.5px;top:149.4px;width:75.5px;height:1px;background:#434343"></div><div class="t" style="left:470.5px;top:140.8px;font-size:6.6px">Y</div><div class="t r" style="left:462.5px;width:68.0px;top:140.8px;font-size:6.7px">-13.4°</div><svg style="left:548px;top:141.6px" width="10" height="8" viewBox="0 0 10 8"><path d="M2 4 V2.8 Q2 1.3 3.4 1.3 Q4.8 1.3 4.8 2.8" fill="none" stroke="#cfcfcf" stroke-width="0.7"/><rect x="4" y="4" width="4.2" height="3.3" fill="none" stroke="#cfcfcf" stroke-width="0.75"/></svg><div class="t" style="left:470.5px;top:151.4px;font-size:6.6px">Z</div><div class="t r" style="left:462.5px;width:68.0px;top:151.4px;font-size:6.7px">-0.000001°</div><svg style="left:548px;top:152.2px" width="10" height="8" viewBox="0 0 10 8"><path d="M2 4 V2.8 Q2 1.3 3.4 1.3 Q4.8 1.3 4.8 2.8" fill="none" stroke="#cfcfcf" stroke-width="0.7"/><rect x="4" y="4" width="4.2" height="3.3" fill="none" stroke="#cfcfcf" stroke-width="0.75"/></svg>
<div class="b" style="left:463px;top:162.5px;width:99px;height:11px;background:#282828"></div>
<div class="t" style="left:466px;top:164.3px">XYZ Euler</div>
<svg style="left:556px;top:166.5px" width="5" height="4" viewBox="0 0 5 4"><path d="M0.6 0.8 L2.5 2.8 L4.4 0.8" fill="none" stroke="#ccc" stroke-width="0.8"/></svg>
<div class="t" style="left:463.5px;top:176px">Scale:</div>
<div class="a" style="left:462.5px;top:185.75px;width:75.5px;height:31.7px;background:#545454;border-radius:2.5px"></div><div class="a" style="left:462.5px;top:195.8px;width:75.5px;height:1px;background:#434343"></div><div class="t" style="left:470.5px;top:187.2px;font-size:6.6px">X</div><div class="t r" style="left:462.5px;width:68.0px;top:187.2px;font-size:6.7px">1.194</div><svg style="left:548px;top:188.1px" width="10" height="8" viewBox="0 0 10 8"><path d="M2 4 V2.8 Q2 1.3 3.4 1.3 Q4.8 1.3 4.8 2.8" fill="none" stroke="#cfcfcf" stroke-width="0.7"/><rect x="4" y="4" width="4.2" height="3.3" fill="none" stroke="#cfcfcf" stroke-width="0.75"/></svg><div class="a" style="left:462.5px;top:206.4px;width:75.5px;height:1px;background:#434343"></div><div class="t" style="left:470.5px;top:197.8px;font-size:6.6px">Y</div><div class="t r" style="left:462.5px;width:68.0px;top:197.8px;font-size:6.7px">1.074</div><svg style="left:548px;top:198.6px" width="10" height="8" viewBox="0 0 10 8"><path d="M2 4 V2.8 Q2 1.3 3.4 1.3 Q4.8 1.3 4.8 2.8" fill="none" stroke="#cfcfcf" stroke-width="0.7"/><rect x="4" y="4" width="4.2" height="3.3" fill="none" stroke="#cfcfcf" stroke-width="0.75"/></svg><div class="t" style="left:470.5px;top:208.4px;font-size:6.6px">Z</div><div class="t r" style="left:462.5px;width:68.0px;top:208.4px;font-size:6.7px">1.074</div><svg style="left:548px;top:209.2px" width="10" height="8" viewBox="0 0 10 8"><path d="M2 4 V2.8 Q2 1.3 3.4 1.3 Q4.8 1.3 4.8 2.8" fill="none" stroke="#cfcfcf" stroke-width="0.7"/><rect x="4" y="4" width="4.2" height="3.3" fill="none" stroke="#cfcfcf" stroke-width="0.75"/></svg>
<div class="t" style="left:463.5px;top:220.5px">Dimensions:</div>
<div class="a" style="left:462.5px;top:230.75px;width:100.0px;height:31.7px;background:#545454;border-radius:2.5px"></div><div class="a" style="left:462.5px;top:240.8px;width:100.0px;height:1px;background:#434343"></div><div class="t" style="left:470.5px;top:232.2px;font-size:6.6px">X</div><div class="t r" style="left:462.5px;width:92.5px;top:232.2px;font-size:6.7px">1.58 m</div><div class="a" style="left:462.5px;top:251.4px;width:100.0px;height:1px;background:#434343"></div><div class="t" style="left:470.5px;top:242.8px;font-size:6.6px">Y</div><div class="t r" style="left:462.5px;width:92.5px;top:242.8px;font-size:6.7px">1.76 m</div><div class="t" style="left:470.5px;top:253.4px;font-size:6.6px">Z</div><div class="t r" style="left:462.5px;width:92.5px;top:253.4px;font-size:6.7px">0.484 m</div>
<!-- tabs -->
<div class="a" style="left:566px;top:56px;width:11px;height:432px;background:#232323"></div>
<div class="a" style="left:566.4px;top:59.3px;width:9.5px;height:17.2px;background:#3d3d3d;border-radius:2px"></div>
<div class="a" style="left:566.4px;top:80.7px;width:9.5px;height:13.6px;background:#2e2e2e;border-radius:2px"></div>
<div class="a" style="left:566.4px;top:100px;width:9.5px;height:17px;background:#2e2e2e;border-radius:2px"></div>
<div class="t" style="left:567.7px;top:74px;transform:rotate(-90deg);transform-origin:0 0;color:#e0e0e0">Item</div>
<div class="t" style="left:567.7px;top:94px;transform:rotate(-90deg);transform-origin:0 0;color:#c8c8c8">Tool</div>
<div class="t" style="left:567.7px;top:116.5px;transform:rotate(-90deg);transform-origin:0 0;color:#c8c8c8">View</div>

<!-- camera text -->
<div class="t" style="left:36.5px;top:60.5px;color:#e6e6e6;letter-spacing:-0.15px">Camera Perspective</div>
<div class="t" style="left:36.5px;top:70px;color:#e6e6e6">(1) Collection | Cylinder002</div>

<!-- ============ OUTLINER ============ -->
<div class="a" style="left:579px;top:27px;width:121px;height:159px;background:#282828;border-radius:3px 0 0 3px;overflow:hidden"></div>
<div class="a" style="left:579px;top:27px;width:121px;height:14px;background:#303030;border-radius:3px 0 0 0"></div>
<div class="b" style="left:584.5px;top:29px;width:16px;height:9.5px;background:#282828"></div>
<svg style="left:585px;top:29.5px" width="16" height="9" viewBox="0 0 16 9"><path d="M1.5 1 H5 M3 3 V7.5 H5 M3 5 H5" stroke="#ddd" stroke-width="0.8" fill="none"/><rect x="5.5" y="3.8" width="4" height="2" fill="#ddd"/><rect x="5.5" y="6.5" width="4" height="2" fill="#ddd"/><path d="M10.9 3.7 L12.7 5.7 L14.5 3.7" fill="none" stroke="#cfcfcf" stroke-width="0.9"/></svg>
<div class="b" style="left:604.5px;top:29px;width:16px;height:9.5px;background:#282828"></div>
<svg style="left:605px;top:29.5px" width="16" height="9" viewBox="0 0 16 9"><rect x="1" y="2.5" width="6" height="6" fill="#777" stroke="#bbb" stroke-width="0.6"/><rect x="3" y="0.5" width="6" height="6" fill="#555" stroke="#ddd" stroke-width="0.7"/><path d="M4.5 5 L6 2.5 L7.5 5Z" fill="#ddd"/><path d="M10.9 3.7 L12.7 5.7 L14.5 3.7" fill="none" stroke="#cfcfcf" stroke-width="0.9"/></svg>
<div class="b" style="left:631px;top:29px;width:59px;height:9.5px;background:#1d1d1d"></div>
<svg style="left:635px;top:29.5px" width="8" height="9" viewBox="0 0 8 9"><circle cx="5" cy="3.5" r="2.3" fill="none" stroke="#ddd" stroke-width="0.8"/><path d="M3.3 5.2 L0.8 7.8" stroke="#ddd" stroke-width="1"/></svg>
<div class="a" style="left:579px;top:52.9px;width:121px;height:10.9px;background:#2b2b2b"></div><div class="a" style="left:579px;top:74.7px;width:121px;height:10.9px;background:#2b2b2b"></div><div class="a" style="left:579px;top:96.5px;width:121px;height:10.9px;background:#2b2b2b"></div><div class="a" style="left:579px;top:118.3px;width:121px;height:10.9px;background:#2b2b2b"></div><div class="a" style="left:579px;top:140.1px;width:121px;height:10.9px;background:#2b2b2b"></div><div class="a" style="left:579px;top:161.9px;width:121px;height:10.9px;background:#2b2b2b"></div><svg style="left:591px;top:43px" width="10" height="9" viewBox="0 0 10 9"><path d="M0.5 1 H9.5 V3 H0.5Z M1.3 3 V8.5 H8.7 V3" fill="none" stroke="#ddd" stroke-width="0.8"/><path d="M3.5 5 H6.5" stroke="#ddd" stroke-width="0.8"/></svg>
<div class="t" style="left:603px;top:44.2px">Scene Collection</div>
<svg style="left:593.5px;top:56px" width="5" height="5" viewBox="0 0 5 5"><path d="M0.3 0.8 H4.7 L2.5 4.2Z" fill="#ccc"/></svg>
<div class="a" style="left:603.5px;top:54.5px;width:7px;height:7px;background:#e6e6e6;border-radius:1px"></div>
<svg style="left:604px;top:55px" width="6" height="6" viewBox="0 0 6 6"><path d="M1 3 L2.5 4.5 L5 1.5" fill="none" stroke="#222" stroke-width="1"/></svg>
<div class="a" style="left:612px;top:53px;width:10px;height:10px;background:#454545;border-radius:2px"></div>
<svg style="left:612.5px;top:54px" width="9" height="8" viewBox="0 0 9 8"><path d="M0.8 0.8 H8.2 V2.5 H0.8Z M1.5 2.5 V7.2 H7.5 V2.5" fill="none" stroke="#ddd" stroke-width="0.7"/><path d="M3.5 4.3 H5.5" stroke="#ddd" stroke-width="0.7"/></svg>
<div class="t" style="left:625px;top:55.2px">Collection</div>
<div class="a" style="left:606px;top:63px;width:1px;height:95px;background:#6a6a6a"></div>
<div class="a" style="left:606px;top:68.9px;width:5px;height:1px;background:#6a6a6a"></div><svg style="left:609px;top:67.4px" width="4" height="4" viewBox="0 0 4 4"><path d="M0.5 0 L3.5 2 L0.5 4Z" fill="#ccc"/></svg><svg style="left:613px;top:64.9px" width="10" height="9" viewBox="0 0 10 9"><circle cx="3" cy="2.2" r="1.7" fill="#e08a3a"/><circle cx="6.5" cy="2.2" r="1.7" fill="#e08a3a"/><rect x="1.5" y="4" width="6" height="4" fill="#e08a3a"/><path d="M7.5 6 L9.5 4.5 V7.5Z" fill="#e08a3a"/></svg><div class="a" style="left:653px;top:64.4px;width:11px;height:10px;background:#454545;border-radius:2px"></div><svg style="left:654px;top:65.4px" width="9" height="8" viewBox="0 0 9 8"><circle cx="3" cy="4" r="2.3" fill="none" stroke="#27a07c" stroke-width="0.9"/><circle cx="6" cy="4" r="2.3" fill="none" stroke="#27a07c" stroke-width="0.9"/></svg><div class="t" style="left:625px;top:66.1px">Camera</div><div class="a" style="left:606px;top:79.9px;width:5px;height:1px;background:#6a6a6a"></div><svg style="left:609px;top:78.4px" width="4" height="4" viewBox="0 0 4 4"><path d="M0.5 0 L3.5 2 L0.5 4Z" fill="#ccc"/></svg><svg style="left:613px;top:76.4px" width="9" height="8" viewBox="0 0 9 8"><path d="M1 1 H8 L4.5 7.2Z" fill="none" stroke="#e08a3a" stroke-width="1.2" stroke-linejoin="round"/></svg><svg style="left:651px;top:75.9px" width="8" height="9" viewBox="0 0 8 9"><path d="M1.2 1.8 H6.8 L4 7.5Z" fill="none" stroke="#27a07c" stroke-width="1"/><circle cx="1.2" cy="1.8" r="1.3" fill="#27a07c"/><circle cx="6.8" cy="1.8" r="1.3" fill="#27a07c"/><circle cx="4" cy="7.5" r="1.3" fill="#27a07c"/></svg><div class="t" style="left:625px;top:77.1px">Cube</div><div class="a" style="left:606px;top:90.9px;width:5px;height:1px;background:#6a6a6a"></div><svg style="left:609px;top:89.4px" width="4" height="4" viewBox="0 0 4 4"><path d="M0.5 0 L3.5 2 L0.5 4Z" fill="#ccc"/></svg><svg style="left:613px;top:87.4px" width="9" height="8" viewBox="0 0 9 8"><path d="M1 1 H8 L4.5 7.2Z" fill="none" stroke="#e08a3a" stroke-width="1.2" stroke-linejoin="round"/></svg><svg style="left:664px;top:86.9px" width="8" height="9" viewBox="0 0 8 9"><path d="M1.2 1.8 H6.8 L4 7.5Z" fill="none" stroke="#27a07c" stroke-width="1"/><circle cx="1.2" cy="1.8" r="1.3" fill="#27a07c"/><circle cx="6.8" cy="1.8" r="1.3" fill="#27a07c"/><circle cx="4" cy="7.5" r="1.3" fill="#27a07c"/></svg><div class="t" style="left:625px;top:88.1px">Cube.001</div><div class="a" style="left:606px;top:101.9px;width:5px;height:1px;background:#6a6a6a"></div><svg style="left:609px;top:100.4px" width="4" height="4" viewBox="0 0 4 4"><path d="M0.5 0 L3.5 2 L0.5 4Z" fill="#ccc"/></svg><svg style="left:613px;top:98.4px" width="9" height="8" viewBox="0 0 9 8"><path d="M1 1 H8 L4.5 7.2Z" fill="none" stroke="#e08a3a" stroke-width="1.2" stroke-linejoin="round"/></svg><svg style="left:660px;top:97.9px" width="8" height="9" viewBox="0 0 8 9"><path d="M1.2 1.8 H6.8 L4 7.5Z" fill="none" stroke="#27a07c" stroke-width="1"/><circle cx="1.2" cy="1.8" r="1.3" fill="#27a07c"/><circle cx="6.8" cy="1.8" r="1.3" fill="#27a07c"/><circle cx="4" cy="7.5" r="1.3" fill="#27a07c"/></svg><div class="t" style="left:625px;top:99.1px">Cylinder</div><div class="a" style="left:606px;top:112.9px;width:5px;height:1px;background:#6a6a6a"></div><svg style="left:609px;top:111.4px" width="4" height="4" viewBox="0 0 4 4"><path d="M0.5 0 L3.5 2 L0.5 4Z" fill="#ccc"/></svg><svg style="left:613px;top:109.4px" width="9" height="8" viewBox="0 0 9 8"><path d="M1 1 H8 L4.5 7.2Z" fill="none" stroke="#e08a3a" stroke-width="1.2" stroke-linejoin="round"/></svg><svg style="left:673px;top:108.9px" width="8" height="9" viewBox="0 0 8 9"><path d="M1.2 1.8 H6.8 L4 7.5Z" fill="none" stroke="#27a07c" stroke-width="1"/><circle cx="1.2" cy="1.8" r="1.3" fill="#27a07c"/><circle cx="6.8" cy="1.8" r="1.3" fill="#27a07c"/><circle cx="4" cy="7.5" r="1.3" fill="#27a07c"/></svg><div class="t" style="left:625px;top:110.1px">Cylinder.001</div><div class="a" style="left:606px;top:123.9px;width:5px;height:1px;background:#6a6a6a"></div><svg style="left:609px;top:122.4px" width="4" height="4" viewBox="0 0 4 4"><path d="M0.5 0 L3.5 2 L0.5 4Z" fill="#ccc"/></svg><div class="a" style="left:612px;top:119.4px;width:11px;height:10px;background:#4a4a4a;border-radius:2px"></div><svg style="left:613px;top:120.4px" width="9" height="8" viewBox="0 0 9 8"><path d="M1 1 H8 L4.5 7.2Z" fill="none" stroke="#e08a3a" stroke-width="1.2" stroke-linejoin="round"/></svg><svg style="left:673px;top:119.9px" width="8" height="9" viewBox="0 0 8 9"><path d="M1.2 1.8 H6.8 L4 7.5Z" fill="none" stroke="#27a07c" stroke-width="1"/><circle cx="1.2" cy="1.8" r="1.3" fill="#27a07c"/><circle cx="6.8" cy="1.8" r="1.3" fill="#27a07c"/><circle cx="4" cy="7.5" r="1.3" fill="#27a07c"/></svg><div class="t" style="left:625px;top:121.1px">Cylinder.002</div><div class="a" style="left:606px;top:134.9px;width:5px;height:1px;background:#6a6a6a"></div><svg style="left:609px;top:133.4px" width="4" height="4" viewBox="0 0 4 4"><path d="M0.5 0 L3.5 2 L0.5 4Z" fill="#ccc"/></svg><svg style="left:613px;top:131.4px" width="9" height="8" viewBox="0 0 9 8"><path d="M1 1 H8 L4.5 7.2Z" fill="none" stroke="#e08a3a" stroke-width="1.2" stroke-linejoin="round"/></svg><svg style="left:673px;top:130.9px" width="8" height="9" viewBox="0 0 8 9"><path d="M1.2 1.8 H6.8 L4 7.5Z" fill="none" stroke="#27a07c" stroke-width="1"/><circle cx="1.2" cy="1.8" r="1.3" fill="#27a07c"/><circle cx="6.8" cy="1.8" r="1.3" fill="#27a07c"/><circle cx="4" cy="7.5" r="1.3" fill="#27a07c"/></svg><div class="t" style="left:625px;top:132.1px">Cylinder.003</div><div class="a" style="left:606px;top:145.9px;width:5px;height:1px;background:#6a6a6a"></div><svg style="left:609px;top:144.4px" width="4" height="4" viewBox="0 0 4 4"><path d="M0.5 0 L3.5 2 L0.5 4Z" fill="#ccc"/></svg><svg style="left:613px;top:141.9px" width="9" height="9" viewBox="0 0 9 9"><circle cx="4.5" cy="3.8" r="3" fill="#e08a3a"/><rect x="3" y="6" width="3" height="2.5" fill="#e08a3a"/><path d="M3.3 3.5 L4.5 5 L5.7 3.5" fill="none" stroke="#553" stroke-width="0.5"/></svg><svg style="left:651px;top:141.9px" width="8" height="9" viewBox="0 0 8 9"><circle cx="4" cy="4.5" r="3.3" fill="none" stroke="#27a07c" stroke-width="0.9"/><circle cx="4" cy="4.5" r="1.1" fill="#27a07c"/></svg><div class="t" style="left:625px;top:143.1px">Light</div><div class="a" style="left:606px;top:156.9px;width:5px;height:1px;background:#6a6a6a"></div><svg style="left:609px;top:155.4px" width="4" height="4" viewBox="0 0 4 4"><path d="M0.5 0 L3.5 2 L0.5 4Z" fill="#ccc"/></svg><svg style="left:613px;top:152.9px" width="9" height="9" viewBox="0 0 9 9"><circle cx="4.5" cy="3.8" r="3" fill="#e08a3a"/><rect x="3" y="6" width="3" height="2.5" fill="#e08a3a"/><path d="M3.3 3.5 L4.5 5 L5.7 3.5" fill="none" stroke="#553" stroke-width="0.5"/></svg><svg style="left:664px;top:152.9px" width="8" height="9" viewBox="0 0 8 9"><circle cx="4" cy="4.5" r="3.3" fill="none" stroke="#27a07c" stroke-width="0.9"/><circle cx="4" cy="4.5" r="1.1" fill="#27a07c"/></svg><div class="t" style="left:625px;top:154.1px">Light.001</div><svg style="left:686px;top:55.4px" width="9" height="6" viewBox="0 0 9 6"><path d="M0.5 3 Q4.5 -1.5 8.5 3 Q4.5 7.5 0.5 3Z" fill="none" stroke="#e0e0e0" stroke-width="0.9"/><circle cx="4.5" cy="3" r="1.3" fill="#e0e0e0"/></svg><svg style="left:686px;top:66.4px" width="9" height="6" viewBox="0 0 9 6"><path d="M0.5 3 Q4.5 -1.5 8.5 3 Q4.5 7.5 0.5 3Z" fill="none" stroke="#e0e0e0" stroke-width="0.9"/><circle cx="4.5" cy="3" r="1.3" fill="#e0e0e0"/></svg><svg style="left:686px;top:77.4px" width="9" height="6" viewBox="0 0 9 6"><path d="M0.5 3 Q4.5 -1.5 8.5 3 Q4.5 7.5 0.5 3Z" fill="none" stroke="#e0e0e0" stroke-width="0.9"/><circle cx="4.5" cy="3" r="1.3" fill="#e0e0e0"/></svg><svg style="left:686px;top:88.4px" width="9" height="6" viewBox="0 0 9 6"><path d="M0.5 3 Q4.5 -1.5 8.5 3 Q4.5 7.5 0.5 3Z" fill="none" stroke="#e0e0e0" stroke-width="0.9"/><circle cx="4.5" cy="3" r="1.3" fill="#e0e0e0"/></svg><svg style="left:686px;top:99.4px" width="9" height="6" viewBox="0 0 9 6"><path d="M0.5 3 Q4.5 -1.5 8.5 3 Q4.5 7.5 0.5 3Z" fill="none" stroke="#e0e0e0" stroke-width="0.9"/><circle cx="4.5" cy="3" r="1.3" fill="#e0e0e0"/></svg><svg style="left:686px;top:110.4px" width="9" height="6" viewBox="0 0 9 6"><path d="M0.5 3 Q4.5 -1.5 8.5 3 Q4.5 7.5 0.5 3Z" fill="none" stroke="#e0e0e0" stroke-width="0.9"/><circle cx="4.5" cy="3" r="1.3" fill="#e0e0e0"/></svg><svg style="left:686px;top:121.4px" width="9" height="6" viewBox="0 0 9 6"><path d="M0.5 3 Q4.5 -1.5 8.5 3 Q4.5 7.5 0.5 3Z" fill="none" stroke="#e0e0e0" stroke-width="0.9"/><circle cx="4.5" cy="3" r="1.3" fill="#e0e0e0"/></svg><svg style="left:686px;top:132.4px" width="9" height="6" viewBox="0 0 9 6"><path d="M0.5 3 Q4.5 -1.5 8.5 3 Q4.5 7.5 0.5 3Z" fill="none" stroke="#e0e0e0" stroke-width="0.9"/><circle cx="4.5" cy="3" r="1.3" fill="#e0e0e0"/></svg><svg style="left:686px;top:143.4px" width="9" height="6" viewBox="0 0 9 6"><path d="M0.5 3 Q4.5 -1.5 8.5 3 Q4.5 7.5 0.5 3Z" fill="none" stroke="#e0e0e0" stroke-width="0.9"/><circle cx="4.5" cy="3" r="1.3" fill="#e0e0e0"/></svg><svg style="left:686px;top:154.4px" width="9" height="6" viewBox="0 0 9 6"><path d="M0.5 3 Q4.5 -1.5 8.5 3 Q4.5 7.5 0.5 3Z" fill="none" stroke="#e0e0e0" stroke-width="0.9"/><circle cx="4.5" cy="3" r="1.3" fill="#e0e0e0"/></svg>

<!-- ============ PROPERTIES ============ -->
<div class="a" style="left:579px;top:188px;width:121px;height:339px;background:#2b2b2b;border-radius:3px 0 0 0;overflow:hidden"></div>
<div class="a" style="left:579px;top:188px;width:121px;height:13px;background:#303030;border-radius:3px 0 0 0"></div>
<div class="b" style="left:584.5px;top:189.5px;width:15px;height:10px;background:#262626"></div>
<svg style="left:585px;top:190px" width="15" height="9" viewBox="0 0 15 9"><rect x="1" y="0.8" width="7.5" height="3.2" rx="1.6" fill="none" stroke="#eee" stroke-width="0.8"/><rect x="1" y="5" width="7.5" height="3.2" rx="1.6" fill="#eee"/><circle cx="3" cy="2.4" r="1" fill="#eee"/><circle cx="6.5" cy="6.6" r="1" fill="#222"/><path d="M9.9 3.5 L11.7 5.5 L13.5 3.5" fill="none" stroke="#cfcfcf" stroke-width="0.9"/></svg>
<svg style="left:608px;top:190px" width="10" height="10" viewBox="0 0 10 10"><rect x="2.5" y="2.5" width="5" height="5" fill="#eee"/><path d="M1 3 V1 H3 M7 1 H9 V3 M9 7 V9 H7 M3 9 H1 V7" fill="none" stroke="#ccc" stroke-width="0.8"/></svg>
<div class="t" style="left:621px;top:191px;color:#e0e0e0">Cylinder.002</div>
<div class="a" style="left:668px;top:192px;width:1px;height:5px;background:#555"></div>
<svg style="left:673px;top:190px" width="10" height="10" viewBox="0 0 10 10"><circle cx="5" cy="5" r="4.2" fill="#eee"/><path d="M5 0.8 V5 L1.5 7.5 A4.2 4.2 0 0 1 5 0.8Z" fill="#333"/><path d="M5 5 L8.5 7.5 A4.2 4.2 0 0 1 1.5 7.5Z" fill="#eee"/><path d="M5 5 H9.2" stroke="#333" stroke-width="0.6"/></svg>
<div class="t" style="left:687px;top:191px;color:#e0e0e0">Mate</div>
<!-- tabs column -->
<div class="a" style="left:579px;top:201px;width:15px;height:326px;background:#1f1f1f"></div>
<div class="a" style="left:580px;top:207.2px;width:13px;height:13.6px;background:#2b2b2b;border-radius:2px"></div><div class="a" style="left:580px;top:226.2px;width:13px;height:13.6px;background:#2b2b2b;border-radius:2px"></div><div class="a" style="left:580px;top:242.2px;width:13px;height:13.6px;background:#2b2b2b;border-radius:2px"></div><div class="a" style="left:580px;top:257.2px;width:13px;height:13.6px;background:#2b2b2b;border-radius:2px"></div><div class="a" style="left:580px;top:272.2px;width:13px;height:13.6px;background:#2b2b2b;border-radius:2px"></div><div class="a" style="left:580px;top:287.5px;width:13px;height:13.6px;background:#2b2b2b;border-radius:2px"></div><div class="a" style="left:580px;top:307.2px;width:13px;height:13.6px;background:#2b2b2b;border-radius:2px"></div><div class="a" style="left:580px;top:323.2px;width:13px;height:13.6px;background:#2b2b2b;border-radius:2px"></div><div class="a" style="left:580px;top:339.2px;width:13px;height:13.6px;background:#2b2b2b;border-radius:2px"></div><div class="a" style="left:580px;top:354.2px;width:13px;height:13.6px;background:#2b2b2b;border-radius:2px"></div><div class="a" style="left:580px;top:369.2px;width:13px;height:13.6px;background:#2b2b2b;border-radius:2px"></div><div class="a" style="left:580px;top:384.2px;width:13px;height:13.6px;background:#2b2b2b;border-radius:2px"></div><div class="a" style="left:580px;top:399.5px;width:14px;height:15px;background:#3d3d3d;border-radius:2px 0 0 2px"></div><div class="a" style="left:580px;top:419.2px;width:13px;height:13.6px;background:#2b2b2b;border-radius:2px"></div>
<svg style="left:579px;top:201px" width="16" height="240" viewBox="0 201 16 240">
 <path d="M5 210 V214 M4 214 H6 V219 H4Z" stroke="#ddd" stroke-width="0.8" fill="#ddd"/>
 <path d="M9 210 Q8 212 9.5 213 V219 M10 210 Q11 212 9.5 213" stroke="#ddd" stroke-width="1" fill="none"/>
 <rect x="3" y="231" width="9" height="6.5" fill="none" stroke="#ddd" stroke-width="0.9"/><path d="M4.5 231 V229.5 H10.5 V231 M3 233.5 H12" stroke="#ddd" stroke-width="0.7" fill="none"/>
 <rect x="2.5" y="244" width="10" height="3" fill="#ddd"/><rect x="4" y="247" width="7" height="5" fill="none" stroke="#ddd" stroke-width="0.9"/>
 <rect x="3" y="261" width="7" height="6" fill="#777" stroke="#bbb" stroke-width="0.6"/><rect x="5" y="259" width="7" height="6" fill="#555" stroke="#ddd" stroke-width="0.7"/><path d="M6.5 264 L8.5 261 L10.5 264Z" fill="#ddd"/>
 <path d="M3 281 L5.5 275 L8 281Z" fill="#ddd"/><circle cx="9" cy="280" r="2.3" fill="none" stroke="#ddd" stroke-width="0.9"/><circle cx="10" cy="275" r="1.2" fill="#ddd"/>
 <circle cx="7.5" cy="294.5" r="4.5" fill="none" stroke="#e0606a" stroke-width="1.1"/><path d="M4.5 292 Q6.5 293.5 5.5 296 Q8 296 9 298.5 M8.5 290.5 Q9.5 292.5 11.5 292.5" fill="none" stroke="#e0606a" stroke-width="0.9"/>
 <rect x="4.5" y="312" width="6" height="6" fill="#e8883a"/><path d="M2.5 313 V311 Q2.5 310 3.5 310 H5.5 M9.5 310 H11.5 Q12.5 310 12.5 311 V313 M12.5 317 V319 Q12.5 320 11.5 320 H9.5 M5.5 320 H3.5 Q2.5 320 2.5 319 V317" fill="none" stroke="#e8883a" stroke-width="0.8"/>
 <path d="M4 334 L9 329 M9.5 325.5 Q12 325 12 327.5 Q11.5 330 9 329.5 M9.5 325.5 L8.5 328" fill="none" stroke="#5b9ae0" stroke-width="1.3" stroke-linecap="round"/>
 <circle cx="4" cy="342" r="1.2" fill="#5b9ae0"/><circle cx="11" cy="342" r="1.2" fill="#5b9ae0"/><circle cx="11" cy="349" r="1.2" fill="#5b9ae0"/><path d="M4 342 H11 M4 342 L11 349 M4 342 V349" stroke="#5b9ae0" stroke-width="0.8"/>
 <circle cx="7.5" cy="361" r="4.5" fill="none" stroke="#5b9ae0" stroke-width="1"/><circle cx="7" cy="361.5" r="2" fill="#5b9ae0"/>
 <circle cx="5.5" cy="378" r="3" fill="none" stroke="#5b9ae0" stroke-width="1.1"/><circle cx="9.5" cy="374" r="3" fill="none" stroke="#5b9ae0" stroke-width="1.1"/>
 <path d="M3.5 386 H11.5 L7.5 394Z" fill="none" stroke="#27a07c" stroke-width="1.2"/><circle cx="3.5" cy="386" r="1.2" fill="#27a07c"/><circle cx="11.5" cy="386" r="1.2" fill="#27a07c"/><circle cx="7.5" cy="394" r="1.2" fill="#27a07c"/>
 <circle cx="7.5" cy="407" r="4.5" fill="#e06a72"/><path d="M7.5 402.5 V407 L3.5 409.5 A4.5 4.5 0 0 1 7.5 402.5Z" fill="#f8e0e0"/><path d="M7.5 407 L11.5 409.5 A4.5 4.5 0 0 1 3.5 409.5Z" fill="#f8e0e0"/>
 <rect x="3" y="422" width="9" height="9" fill="#e06a72"/><path d="M3 422 h2 v2 h-2z M7 422 h2 v2 h-2z M5 424 h2 v2 h-2z M9 424 h2 v2 h-2z M3 426 h2 v2 h-2z M7 426 h2 v2 h-2z M5 428 h2 v2 h-2z M9 428 h2 v2 h-2z M11 422 h1 v2 h-1z M11 426 h1 v2 h-1z M3 430 h2 v1 h-2z M7 430 h2 v1 h-2z" fill="#3a2a2a"/>
</svg>
<!-- content -->
<div class="a" style="left:594px;top:201px;width:106px;height:326px;background:#3d3d3d"></div>
<div class="a" style="left:599px;top:207.3px;width:80.5px;height:20.6px;background:#282828;border-radius:3px"></div>
<div class="a" style="left:602px;top:210px;width:75px;height:9.8px;background:#5e636b;border-radius:2px"></div>
<div class="a" style="left:603.5px;top:211px;width:7.5px;height:7.5px;border-radius:50%;background:radial-gradient(circle at 35% 35%,#f0a050,#b85e10 70%)"></div>
<div class="t" style="left:615.5px;top:211px;color:#f0f0f0">Material</div>
<svg style="left:605px;top:221.5px" width="4" height="4" viewBox="0 0 4 4"><path d="M0.5 0 L3.5 2 L0.5 4Z" fill="#aaa"/></svg>
<div class="a" style="left:642px;top:222.5px;width:6px;height:2.5px;border-left:1px dotted #777;border-right:1px dotted #777"></div>
<div class="a" style="left:685.7px;top:207.3px;width:9.5px;height:10.3px;background:#545454;border-radius:2px 2px 0 0"></div>
<div class="a" style="left:685.7px;top:217.8px;width:9.5px;height:10.3px;background:#4a4a4a;border-radius:0 0 2px 2px"></div>
<div class="a" style="left:688px;top:212px;width:5px;height:1px;background:#ddd"></div><div class="a" style="left:690px;top:210px;width:1px;height:5px;background:#ddd"></div>
<div class="a" style="left:688px;top:222.5px;width:5px;height:1.1px;background:#ddd"></div>
<div class="b" style="left:685.7px;top:229.6px;width:9.5px;height:9px;background:#232323"></div>
<svg style="left:688px;top:232.5px" width="5" height="4" viewBox="0 0 5 4"><path d="M0.6 0.8 L2.5 2.8 L4.4 0.8" fill="none" stroke="#ccc" stroke-width="0.8"/></svg>
<!-- material browse -->
<div class="a" style="left:599px;top:243px;width:12px;height:9.5px;background:#282828;border-radius:2px 0 0 2px"></div>
<svg style="left:600px;top:243px" width="10" height="10" viewBox="0 0 10 10"><circle cx="5" cy="4.8" r="3.8" fill="#e8e8e8"/><path d="M2 3 Q3.5 3.2 3.8 4.5 Q3 6 4 7.5 M6 1.5 Q5.5 3 7 3.5 Q8.5 4 8.6 5.5 M5.5 6 Q7 6.5 6.5 8.3" fill="none" stroke="#333" stroke-width="0.9"/></svg>
<div class="a" style="left:611px;top:243px;width:15px;height:9.5px;background:#1d1d1d"></div>
<div class="t" style="left:614px;top:244px;color:#e0e0e0">Ma</div>
<div class="a" style="left:626px;top:243px;width:33px;height:9.5px;background:#4a4a4a;border-radius:0 2px 2px 0"></div>
<div class="t" style="left:628px;top:244px;color:#ddd">2</div>
<svg style="left:634px;top:243.5px" width="24" height="9" viewBox="0 0 24 9"><path d="M1 1.5 L3.5 0.8 L6 1.5 V4.5 Q6 7 3.5 8.2 Q1 7 1 4.5Z" fill="none" stroke="#999" stroke-width="0.7"/><rect x="8.5" y="2" width="4.5" height="5.5" fill="none" stroke="#aaa" stroke-width="0.7"/><rect x="10" y="0.8" width="4.5" height="5.5" fill="#4a4a4a" stroke="#bbb" stroke-width="0.7"/><path d="M17 2 L21 6.5 M21 2 L17 6.5" stroke="#bbb" stroke-width="0.8"/></svg>
<div class="b" style="left:663px;top:243px;width:32px;height:9.5px;background:#282828"></div>
<div class="t" style="left:667px;top:244px;color:#ddd">Data</div>
<svg style="left:688px;top:246.3px" width="5" height="4" viewBox="0 0 5 4"><path d="M0.6 0.8 L2.5 2.8 L4.4 0.8" fill="none" stroke="#ccc" stroke-width="0.8"/></svg>
<!-- Preview / Surface -->
<svg style="left:599px;top:262.5px" width="4" height="4" viewBox="0 0 4 4"><path d="M0.5 0 L3.5 2 L0.5 4Z" fill="#bbb"/></svg>
<div class="t" style="left:606.5px;top:260.5px;color:#d8d8d8;font-size:6.6px">Preview</div>
<svg style="left:598.5px;top:275.5px" width="5" height="4" viewBox="0 0 5 4"><path d="M0.3 0.5 H4.7 L2.5 3.7Z" fill="#bbb"/></svg>
<div class="t" style="left:606.5px;top:273.5px;color:#d8d8d8;font-size:6.6px">Surface</div>
<div class="a" style="left:692px;top:262px;width:7px;height:1px;background:#4d4d4d"></div><div class="a" style="left:692px;top:264px;width:7px;height:1px;background:#4d4d4d"></div><div class="a" style="left:692px;top:266px;width:7px;height:1px;background:#4d4d4d"></div>
<div class="a" style="left:692px;top:275px;width:7px;height:1px;background:#4d4d4d"></div><div class="a" style="left:692px;top:277px;width:7px;height:1px;background:#4d4d4d"></div><div class="a" style="left:692px;top:279px;width:7px;height:1px;background:#4d4d4d"></div>
<div class="a" style="left:594px;top:284px;width:106px;height:243px;background:#383838"></div>
<div class="t r" style="left:590px;width:38px;top:289.5px">Surface</div>
<div class="b" style="left:633.6px;top:289.3px;width:50.4px;height:8.6px;background:#232323"></div>
<div class="a" style="left:636.5px;top:292px;width:3.3px;height:3.3px;background:#62c654;border-radius:50%"></div>
<div class="t" style="left:644px;top:289.5px;color:#e0e0e0">Principled BS...</div>
<div class="b" style="left:633.6px;top:309px;width:50.4px;height:9px;background:#232323"></div>
<div class="t" style="left:637px;top:309.5px;color:#e0e0e0">GGX</div>
<svg style="left:678px;top:312px" width="5" height="4" viewBox="0 0 5 4"><path d="M0.6 0.8 L2.5 2.8 L4.4 0.8" fill="none" stroke="#ccc" stroke-width="0.8"/></svg>
<div class="a" style="left:688.5px;top:312.0px;width:3px;height:3px;background:#e0e0e0;border-radius:50%"></div>
<div class="b" style="left:633.6px;top:322.5px;width:50.4px;height:9.3px;background:#232323"></div>
<div class="t" style="left:637px;top:323.3px;color:#e0e0e0;letter-spacing:-0.2px">Christensen-B...</div>
<svg style="left:678px;top:325.5px" width="5" height="4" viewBox="0 0 5 4"><path d="M0.6 0.8 L2.5 2.8 L4.4 0.8" fill="none" stroke="#ccc" stroke-width="0.8"/></svg>
<div class="a" style="left:688.5px;top:325.5px;width:3px;height:3px;background:#e0e0e0;border-radius:50%"></div><div class="t r" style="left:590px;width:38px;top:336.7px">Base Color</div><div class="a" style="left:633.6px;top:335.7px;width:9px;height:10.0px;background:#232323;border-radius:2px 0 0 2px"></div><div class="a" style="left:636.2px;top:338.8px;width:3.8px;height:3.8px;background:#d8cf2c;border-radius:50%"></div><div class="a" style="left:643.75px;top:335.7px;width:40.25px;height:10.0px;background:#a65b27;border-radius:0 2px 2px 0"></div><div class="a" style="left:688.5px;top:339.2px;width:3px;height:3px;background:#e0e0e0;border-radius:50%"></div><div class="t r" style="left:590px;width:38px;top:350.3px">Subsurfac</div><div class="a" style="left:633.6px;top:349.6px;width:9px;height:9.399999999999977px;background:#232323;border-radius:2px 0 0 2px"></div><div class="a" style="left:636.2px;top:352.4px;width:3.8px;height:3.8px;background:#bdbdbd;border-radius:50%"></div><div class="a" style="left:643.75px;top:349.6px;width:40.25px;height:9.399999999999977px;background:#545454;border-radius:0 2px 2px 0"></div><div class="t c" style="left:643.75px;width:40.25px;top:350.3px;color:#e6e6e6">0.000</div><div class="a" style="left:688.5px;top:352.8px;width:3px;height:3px;background:#e0e0e0;border-radius:50%"></div><div class="t r" style="left:590px;width:40px;top:364px">Subsurfa...</div><div class="a" style="left:633.6px;top:363px;width:9px;height:9.5px;background:#232323;border-radius:2px"></div><div class="a" style="left:636.2px;top:365.8px;width:3.8px;height:3.8px;background:#6a6ae0;border-radius:50%"></div><div class="a" style="left:647.3px;top:363px;width:36.7px;height:31.3px;background:#545454;border-radius:2px"></div><div class="a" style="left:647.3px;top:373.5px;width:36.7px;height:1px;background:#444"></div><div class="a" style="left:647.3px;top:384px;width:36.7px;height:1px;background:#444"></div><div class="t c" style="left:647.3px;width:36.7px;top:364.0px;color:#e6e6e6">1.000</div><div class="a" style="left:688.5px;top:366.5px;width:3px;height:3px;background:#e0e0e0;border-radius:50%"></div><div class="t c" style="left:647.3px;width:36.7px;top:374.5px;color:#e6e6e6">0.200</div><div class="a" style="left:688.5px;top:377.0px;width:3px;height:3px;background:#e0e0e0;border-radius:50%"></div><div class="t c" style="left:647.3px;width:36.7px;top:385.0px;color:#e6e6e6">0.100</div><div class="a" style="left:688.5px;top:387.5px;width:3px;height:3px;background:#e0e0e0;border-radius:50%"></div><div class="t r" style="left:590px;width:38px;top:399.7px">Subsurfa...</div><div class="a" style="left:633.6px;top:398.75px;width:9px;height:9.850000000000023px;background:#232323;border-radius:2px 0 0 2px"></div><div class="a" style="left:636.2px;top:401.8px;width:3.8px;height:3.8px;background:#d8cf2c;border-radius:50%"></div><div class="a" style="left:643.75px;top:398.75px;width:40.25px;height:9.850000000000023px;background:#e6e6e6;border-radius:0 2px 2px 0"></div><div class="a" style="left:688.5px;top:402.2px;width:3px;height:3px;background:#e0e0e0;border-radius:50%"></div><div class="a" style="left:643.75px;top:398.75px;width:40.25px;height:9.85px;border:1px solid #fff;border-radius:0 2px 2px 0"></div><div class="t r" style="left:590px;width:38px;top:413.1px">Metallic</div><div class="a" style="left:633.6px;top:412.5px;width:9px;height:9.300000000000011px;background:#232323;border-radius:2px 0 0 2px"></div><div class="a" style="left:636.2px;top:415.2px;width:3.8px;height:3.8px;background:#bdbdbd;border-radius:50%"></div><div class="a" style="left:643.75px;top:412.5px;width:40.25px;height:9.300000000000011px;background:#545454;border-radius:0 2px 2px 0"></div><div class="t c" style="left:643.75px;width:40.25px;top:413.1px;color:#e6e6e6">0.000</div><div class="a" style="left:688.5px;top:415.6px;width:3px;height:3px;background:#e0e0e0;border-radius:50%"></div><div class="t r" style="left:590px;width:38px;top:427.0px">Specular</div><div class="a" style="left:633.6px;top:426.25px;width:9px;height:9.449999999999989px;background:#232323;border-radius:2px 0 0 2px"></div><div class="a" style="left:636.2px;top:429.1px;width:3.8px;height:3.8px;background:#bdbdbd;border-radius:50%"></div><div class="a" style="left:643.75px;top:426.25px;width:40.25px;height:9.449999999999989px;background:#545454;border-radius:0 2px 2px 0"></div><div class="a" style="left:643.75px;top:426.25px;width:19.5px;height:9.449999999999989px;background:#4772b3"></div><div class="t c" style="left:643.75px;width:40.25px;top:427.0px;color:#e6e6e6">0.500</div><div class="a" style="left:688.5px;top:429.5px;width:3px;height:3px;background:#e0e0e0;border-radius:50%"></div><div class="t r" style="left:590px;width:38px;top:440.5px">Specular ...</div><div class="a" style="left:633.6px;top:439.8px;width:9px;height:9.399999999999977px;background:#232323;border-radius:2px 0 0 2px"></div><div class="a" style="left:636.2px;top:442.6px;width:3.8px;height:3.8px;background:#bdbdbd;border-radius:50%"></div><div class="a" style="left:643.75px;top:439.8px;width:40.25px;height:9.399999999999977px;background:#545454;border-radius:0 2px 2px 0"></div><div class="t c" style="left:643.75px;width:40.25px;top:440.5px;color:#e6e6e6">0.000</div><div class="a" style="left:688.5px;top:443.0px;width:3px;height:3px;background:#e0e0e0;border-radius:50%"></div><div class="t r" style="left:590px;width:38px;top:454.2px">Roughness</div><div class="a" style="left:633.6px;top:453.6px;width:9px;height:9.299999999999955px;background:#232323;border-radius:2px 0 0 2px"></div><div class="a" style="left:636.2px;top:456.3px;width:3.8px;height:3.8px;background:#bdbdbd;border-radius:50%"></div><div class="a" style="left:643.75px;top:453.6px;width:40.25px;height:9.299999999999955px;background:#545454;border-radius:0 2px 2px 0"></div><div class="a" style="left:643.75px;top:453.6px;width:15.5px;height:9.299999999999955px;background:#4772b3"></div><div class="t c" style="left:643.75px;width:40.25px;top:454.2px;color:#e6e6e6">0.400</div><div class="a" style="left:688.5px;top:456.8px;width:3px;height:3px;background:#e0e0e0;border-radius:50%"></div><div class="t r" style="left:590px;width:38px;top:467.9px">Anisotrop...</div><div class="a" style="left:633.6px;top:467.2px;width:9px;height:9.400000000000034px;background:#232323;border-radius:2px 0 0 2px"></div><div class="a" style="left:636.2px;top:470.0px;width:3.8px;height:3.8px;background:#bdbdbd;border-radius:50%"></div><div class="a" style="left:643.75px;top:467.2px;width:40.25px;height:9.400000000000034px;background:#545454;border-radius:0 2px 2px 0"></div><div class="t c" style="left:643.75px;width:40.25px;top:467.9px;color:#e6e6e6">0.000</div><div class="a" style="left:688.5px;top:470.4px;width:3px;height:3px;background:#e0e0e0;border-radius:50%"></div><div class="t r" style="left:590px;width:38px;top:481.8px">Anisotrop...</div><div class="a" style="left:633.6px;top:481px;width:9px;height:9.5px;background:#232323;border-radius:2px 0 0 2px"></div><div class="a" style="left:636.2px;top:483.8px;width:3.8px;height:3.8px;background:#bdbdbd;border-radius:50%"></div><div class="a" style="left:643.75px;top:481px;width:40.25px;height:9.5px;background:#545454;border-radius:0 2px 2px 0"></div><div class="t c" style="left:643.75px;width:40.25px;top:481.8px;color:#e6e6e6">0.000</div><div class="a" style="left:688.5px;top:484.2px;width:3px;height:3px;background:#e0e0e0;border-radius:50%"></div><div class="t r" style="left:590px;width:38px;top:495.2px">Sheen</div><div class="a" style="left:633.6px;top:494.5px;width:9px;height:9.5px;background:#232323;border-radius:2px 0 0 2px"></div><div class="a" style="left:636.2px;top:497.3px;width:3.8px;height:3.8px;background:#bdbdbd;border-radius:50%"></div><div class="a" style="left:643.75px;top:494.5px;width:40.25px;height:9.5px;background:#545454;border-radius:0 2px 2px 0"></div><div class="t c" style="left:643.75px;width:40.25px;top:495.2px;color:#e6e6e6">0.000</div><div class="a" style="left:688.5px;top:497.8px;width:3px;height:3px;background:#e0e0e0;border-radius:50%"></div><div class="t r" style="left:590px;width:38px;top:508.8px">Sheen Tint</div><div class="a" style="left:633.6px;top:508px;width:9px;height:9.5px;background:#232323;border-radius:2px 0 0 2px"></div><div class="a" style="left:636.2px;top:510.8px;width:3.8px;height:3.8px;background:#bdbdbd;border-radius:50%"></div><div class="a" style="left:643.75px;top:508px;width:40.25px;height:9.5px;background:#545454;border-radius:0 2px 2px 0"></div><div class="a" style="left:643.75px;top:508px;width:19.5px;height:9.5px;background:#4772b3"></div><div class="t c" style="left:643.75px;width:40.25px;top:508.8px;color:#e6e6e6">0.500</div><div class="a" style="left:688.5px;top:511.2px;width:3px;height:3px;background:#e0e0e0;border-radius:50%"></div><div class="t r" style="left:590px;width:38px;top:522.3px">Clearcoat</div><div class="a" style="left:633.6px;top:521.6px;width:9px;height:9.399999999999977px;background:#232323;border-radius:2px 0 0 2px"></div><div class="a" style="left:636.2px;top:524.4px;width:3.8px;height:3.8px;background:#bdbdbd;border-radius:50%"></div><div class="a" style="left:643.75px;top:521.6px;width:40.25px;height:9.399999999999977px;background:#545454;border-radius:0 2px 2px 0"></div><div class="t c" style="left:643.75px;width:40.25px;top:522.3px;color:#e6e6e6">0.000</div><div class="a" style="left:688.5px;top:524.8px;width:3px;height:3px;background:#e0e0e0;border-radius:50%"></div>

<!-- ============ TIMELINE ============ -->
<div class="a" style="left:0;top:489px;width:577px;height:38px;background:#2a2a2a;border-radius:3px 3px 0 0"></div>
<div class="a" style="left:0;top:489px;width:577px;height:15px;background:#303030;border-radius:3px 3px 0 0"></div>
<div class="b" style="left:5px;top:491px;width:16px;height:11px;background:#262626"></div>
<svg style="left:6px;top:491.5px" width="15" height="10" viewBox="0 0 15 10"><circle cx="5" cy="5" r="4.2" fill="#eee"/><path d="M5 2 V5 H7.5" stroke="#333" stroke-width="0.9" fill="none"/><path d="M10.4 4.0 L12.2 6.0 L14.0 4.0" fill="none" stroke="#cfcfcf" stroke-width="0.9"/></svg>
<div class="b" style="left:25px;top:491px;width:37px;height:11px;background:#262626"></div>
<div class="t" style="left:28.5px;top:493px">Playback</div>
<svg style="left:56px;top:495.5px" width="5" height="4" viewBox="0 0 5 4"><path d="M0.6 0.8 L2.5 2.8 L4.4 0.8" fill="none" stroke="#ccc" stroke-width="0.8"/></svg>
<div class="b" style="left:63px;top:491px;width:31.5px;height:11px;background:#262626"></div>
<div class="t" style="left:66px;top:493px">Keying</div>
<svg style="left:88.5px;top:495.5px" width="5" height="4" viewBox="0 0 5 4"><path d="M0.6 0.8 L2.5 2.8 L4.4 0.8" fill="none" stroke="#ccc" stroke-width="0.8"/></svg>
<div class="t" style="left:99px;top:493px">View</div>
<div class="t" style="left:121px;top:493px">Marker</div>
<div class="b" style="left:244px;top:491.8px;width:9.6px;height:10.2px;background:#3d3d3d"></div><div class="a" style="left:246.8px;top:494.9px;width:4px;height:4px;background:#e0e0e0;border-radius:50%"></div><div class="b" style="left:258px;top:491.8px;width:64px;height:10.2px;background:#3a3a3a"></div><svg style="left:0;top:0" width="700" height="560" viewBox="0 0 700 560"><path d="M268.7 492 V502" stroke="#2e2e2e" stroke-width="0.6"/><path d="M279.3 492 V502" stroke="#2e2e2e" stroke-width="0.6"/><path d="M290.0 492 V502" stroke="#2e2e2e" stroke-width="0.6"/><path d="M300.7 492 V502" stroke="#2e2e2e" stroke-width="0.6"/><path d="M311.4 492 V502" stroke="#2e2e2e" stroke-width="0.6"/><path d="M260.5 494.2 V499.8" stroke="#e6e6e6" stroke-width="1"/><path d="M266.1 494 L261.8 497 L266.1 500Z" fill="#e6e6e6"/><path d="M272.0 494.8 L269.8 497 L272.0 499.2 L274.2 497Z" fill="#e6e6e6"/><path d="M277.5 494.5 L274.8 497 L277.5 499.5Z" fill="#e6e6e6"/><path d="M287.2 493.5 L282.2 497 L287.2 500.5Z" fill="#e6e6e6"/><path d="M292.8 493.5 L297.8 497 L292.8 500.5Z" fill="#e6e6e6"/><path d="M302.5 494.5 L305.2 497 L302.5 499.5Z" fill="#e6e6e6"/><path d="M308.0 494.8 L310.2 497 L308.0 499.2 L305.8 497Z" fill="#e6e6e6"/><path d="M319.5 494.2 V499.8" stroke="#e6e6e6" stroke-width="1"/><path d="M313.9 494 L318.2 497 L313.9 500Z" fill="#e6e6e6"/></svg>
<div class="b" style="left:419.4px;top:492px;width:40px;height:10px;background:#545454"></div>
<div class="t c" style="left:419.4px;width:40px;top:493px;color:#e8e8e8">1</div>
<div class="b" style="left:463.4px;top:492px;width:104px;height:10px;background:#545454"></div>
<div class="a" style="left:463.4px;top:492px;width:9.4px;height:10px;background:#3d3d3d;border-radius:2px 0 0 2px"></div>
<svg style="left:464px;top:492px" width="9" height="10" viewBox="0 0 9 10"><circle cx="4.5" cy="5.8" r="3.2" fill="none" stroke="#ddd" stroke-width="0.8"/><path d="M4.5 5.8 L5.8 4.3 M3.5 1.5 H5.5 M4.5 1.5 V2.6" stroke="#ddd" stroke-width="0.7"/></svg>
<div class="a" style="left:521.5px;top:492px;width:1px;height:10px;background:#444"></div>
<div class="t" style="left:481.5px;top:493px;color:#e8e8e8">Start</div>
<div class="t r" style="left:491px;width:23px;top:493px;color:#e8e8e8">1</div>
<div class="t" style="left:529.5px;top:493px;color:#e8e8e8">End</div>
<div class="t r" style="left:537px;width:23px;top:493px;color:#e8e8e8">250</div>
<!-- ruler -->
<div class="a" style="left:0;top:516px;width:577px;height:5px;background:#393939"></div>
<div class="a" style="left:556px;top:515px;width:21px;height:11px;background:#232323;opacity:.5"></div>
<div class="t c" style="left:52.2px;width:20px;top:506.5px;color:#c8c8c8">20</div><div class="t c" style="left:95.1px;width:20px;top:506.5px;color:#c8c8c8">40</div><div class="t c" style="left:138.0px;width:20px;top:506.5px;color:#c8c8c8">60</div><div class="t c" style="left:180.9px;width:20px;top:506.5px;color:#c8c8c8">80</div><div class="t c" style="left:223.9px;width:20px;top:506.5px;color:#c8c8c8">100</div><div class="t c" style="left:266.8px;width:20px;top:506.5px;color:#c8c8c8">120</div><div class="t c" style="left:309.7px;width:20px;top:506.5px;color:#c8c8c8">140</div><div class="t c" style="left:352.6px;width:20px;top:506.5px;color:#c8c8c8">160</div><div class="t c" style="left:395.5px;width:20px;top:506.5px;color:#c8c8c8">180</div><div class="t c" style="left:438.5px;width:20px;top:506.5px;color:#c8c8c8">200</div><div class="t c" style="left:481.4px;width:20px;top:506.5px;color:#c8c8c8">220</div><div class="t c" style="left:524.3px;width:20px;top:506.5px;color:#c8c8c8">240</div><div class="a" style="left:40.7px;top:516px;width:1px;height:5px;background:#2f2f2f"></div><div class="a" style="left:62.2px;top:516px;width:1px;height:5px;background:#2c2c2c"></div><div class="a" style="left:83.6px;top:516px;width:1px;height:5px;background:#2f2f2f"></div><div class="a" style="left:105.1px;top:516px;width:1px;height:5px;background:#2c2c2c"></div><div class="a" style="left:126.6px;top:516px;width:1px;height:5px;background:#2f2f2f"></div><div class="a" style="left:148.0px;top:516px;width:1px;height:5px;background:#2c2c2c"></div><div class="a" style="left:169.5px;top:516px;width:1px;height:5px;background:#2f2f2f"></div><div class="a" style="left:190.9px;top:516px;width:1px;height:5px;background:#2c2c2c"></div><div class="a" style="left:212.4px;top:516px;width:1px;height:5px;background:#2f2f2f"></div><div class="a" style="left:233.9px;top:516px;width:1px;height:5px;background:#2c2c2c"></div><div class="a" style="left:255.3px;top:516px;width:1px;height:5px;background:#2f2f2f"></div><div class="a" style="left:276.8px;top:516px;width:1px;height:5px;background:#2c2c2c"></div><div class="a" style="left:298.2px;top:516px;width:1px;height:5px;background:#2f2f2f"></div><div class="a" style="left:319.7px;top:516px;width:1px;height:5px;background:#2c2c2c"></div><div class="a" style="left:341.2px;top:516px;width:1px;height:5px;background:#2f2f2f"></div><div class="a" style="left:362.6px;top:516px;width:1px;height:5px;background:#2c2c2c"></div><div class="a" style="left:384.1px;top:516px;width:1px;height:5px;background:#2f2f2f"></div><div class="a" style="left:405.5px;top:516px;width:1px;height:5px;background:#2c2c2c"></div><div class="a" style="left:427.0px;top:516px;width:1px;height:5px;background:#2f2f2f"></div><div class="a" style="left:448.5px;top:516px;width:1px;height:5px;background:#2c2c2c"></div><div class="a" style="left:469.9px;top:516px;width:1px;height:5px;background:#2f2f2f"></div><div class="a" style="left:491.4px;top:516px;width:1px;height:5px;background:#2c2c2c"></div><div class="a" style="left:512.8px;top:516px;width:1px;height:5px;background:#2f2f2f"></div><div class="a" style="left:534.3px;top:516px;width:1px;height:5px;background:#2c2c2c"></div><div class="a" style="left:555.8px;top:516px;width:1px;height:5px;background:#2f2f2f"></div>
<div class="a" style="left:556px;top:514px;width:1px;height:12px;background:#181818"></div>
<div class="a" style="left:5px;top:520.9px;width:569px;height:4.8px;background:#686868;border-radius:2.5px"></div>
<div class="a" style="left:6px;top:521.6px;width:3.6px;height:3.6px;background:#3a3a3a;border-radius:50%"></div>
<div class="a" style="left:569.5px;top:521.6px;width:3.6px;height:3.6px;background:#3a3a3a;border-radius:50%"></div>
<div class="a" style="left:21px;top:514px;width:1px;height:12.5px;background:#4772b3"></div>
<div class="a" style="left:15px;top:505px;width:13px;height:9.3px;background:#4772b3;border-radius:2px"></div>
<div class="t c" style="left:15px;width:13px;top:506px;color:#f4f4f4">1</div>
<svg style="left:0.5px;top:512px" width="3" height="5" viewBox="0 0 3 5"><path d="M0.5 0.5 L2.3 2.5 L0.5 4.5" fill="none" stroke="#888" stroke-width="0.6"/></svg>
<svg style="left:574px;top:512px" width="3" height="5" viewBox="0 0 3 5"><path d="M2.5 0.5 L0.7 2.5 L2.5 4.5" fill="none" stroke="#888" stroke-width="0.6"/></svg>

<!-- ============ STATUS BAR ============ -->
<div class="a" style="left:0;top:527.5px;width:700px;height:10.5px;background:#2b2b2b"></div>
<svg style="left:5px;top:528px" width="300" height="10" viewBox="0 0 300 10">
 <rect x="1.5" y="0.8" width="5" height="8" rx="2.5" fill="none" stroke="#bbb" stroke-width="0.7"/><rect x="2" y="1.2" width="2" height="3.5" fill="#ccc"/>
 <rect x="37.5" y="0.8" width="5" height="8" rx="2.5" fill="none" stroke="#bbb" stroke-width="0.7"/><rect x="38" y="1.2" width="2" height="3.5" fill="#ccc"/><path d="M44 1.5 Q45.5 2.5 44 4" fill="none" stroke="#bbb" stroke-width="0.6"/>
 <rect x="131.5" y="0.8" width="5" height="8" rx="2.5" fill="none" stroke="#bbb" stroke-width="0.7"/><path d="M134 1 V4" stroke="#ccc" stroke-width="0.7"/>
 <rect x="261.5" y="0.8" width="5" height="8" rx="2.5" fill="none" stroke="#bbb" stroke-width="0.7"/><rect x="264" y="1.2" width="2" height="3.5" fill="#ccc"/>
</svg>
<div class="t" style="left:18.5px;top:528.5px;color:#bdbdbd">Select</div>
<div class="t" style="left:55px;top:528.5px;color:#bdbdbd">Move</div>
<div class="t" style="left:148px;top:528.5px;color:#bdbdbd">Rotate View</div>
<div class="t" style="left:276.5px;top:528.5px;color:#bdbdbd">Object Context Menu</div>
<div class="t r" style="left:640px;width:51px;top:528.5px;color:#9a9a9a">2.90.0</div>

<!-- ============ TASKBAR ============ -->
<div class="a" style="left:0;top:538px;width:700px;height:22px;background:#1f1f1f"></div>
<svg style="left:0;top:538px" width="700" height="22" viewBox="0 538 700 22">
 <path d="M8.8 545.8 L12.8 545.2 V548.8 H8.8Z M13.6 545.1 L17.6 544.5 V548.8 H13.6Z M8.8 549.6 H12.8 V553.2 L8.8 552.6Z M13.6 549.6 H17.6 V553.9 L13.6 553.3Z" fill="#f2f2f2"/>
 <rect x="36" y="545.5" width="6" height="7" fill="none" stroke="#e6e6e6" stroke-width="0.8"/><path d="M34.5 545 V553 M43.5 545 V553 M45 545.5 V547 M45 548.5 V550 M45 551.5 V553" stroke="#e6e6e6" stroke-width="0.8"/>
 <path d="M61 546 H66 L67 547.2 H73 V553.5 H61Z" fill="#f0c244"/><path d="M61 548.5 H73 V553.5 H61Z" fill="#f7d46a"/><rect x="63.5" y="551" width="7" height="2.5" fill="#2d8fe0"/>
 <path d="M94 549.2 L88.89 546.25 A5.9 5.9 0 0 1 99.11 546.25 Z" fill="#db4437"/><path d="M94 549.2 L99.11 546.25 A5.9 5.9 0 0 1 94.00 555.10 Z" fill="#f4c20d"/><path d="M94 549.2 L94.00 555.10 A5.9 5.9 0 0 1 88.89 546.25 Z" fill="#0f9d58"/><circle cx="94" cy="549.2" r="2.8" fill="#fff"/><circle cx="94" cy="549.2" r="2.2" fill="#4285f4"/>
 <rect x="108" y="538" width="25.7" height="22" fill="#383838"/>
 <path d="M120.5 546.2 L116.8 546.2" stroke="#f08a1c" stroke-width="1.5" stroke-linecap="round"/><path d="M120.5 548.5 L115.3 552.8" stroke="#f08a1c" stroke-width="1.7" stroke-linecap="round"/><circle cx="122.3" cy="550" r="4.6" fill="#f08a1c"/><circle cx="122.6" cy="549.8" r="2.8" fill="#fff"/><circle cx="122.6" cy="549.8" r="1.6" fill="#255a98"/>
 <rect x="83" y="558.5" width="20.5" height="1.5" fill="#76b9ed"/>
 <rect x="108" y="558.5" width="25.7" height="1.5" fill="#76b9ed"/>
 <path d="M566.5 550 L569.4 547 L572.3 550" fill="none" stroke="#e6e6e6" stroke-width="0.9"/>
 <path d="M579 546 L582.6 544.8 L586.2 546 V549.5 Q586.2 552.5 582.6 554 Q579 552.5 579 549.5Z" fill="#e8e8e8"/><path d="M582.6 545 V553.5 M579.5 549 H586" stroke="#444" stroke-width="0.6"/><path d="M584 554 L586.5 549.5 L589 554Z" fill="#f0c020"/>
 <rect x="591" y="545.5" width="8.5" height="6" fill="none" stroke="#e0e0e0" stroke-width="0.8"/><path d="M593 553.5 H597.5 M595.2 551.5 V553.5" stroke="#e0e0e0" stroke-width="0.8"/><path d="M590 547 V551" stroke="#e0e0e0" stroke-width="0.6"/>
 <path d="M604 547.5 H606 L608.5 545.3 V553.7 L606 551.5 H604Z" fill="none" stroke="#e0e0e0" stroke-width="0.8"/><path d="M610 547.5 Q611 549.5 610 551.5 M611.5 546.5 Q613 549.5 611.5 552.5" fill="none" stroke="#e0e0e0" stroke-width="0.7"/>
 <path d="M678 545 H687 V551.5 H683 L680.5 553.8 V551.5 H678Z" fill="none" stroke="#e6e6e6" stroke-width="0.8"/><path d="M680 547 H685 M680 549 H685" stroke="#e6e6e6" stroke-width="0.6"/>
</svg>
<div class="t" style="left:618.5px;top:545.5px;color:#e6e6e6;font-size:6.6px">РУС</div>
<div class="t c" style="left:635px;width:36px;top:540.5px;color:#e6e6e6;font-size:6.4px">16:48</div>
<div class="t c" style="left:635px;width:36px;top:549.5px;color:#e6e6e6;font-size:6.4px">12.09.2020</div>

</body></html>
